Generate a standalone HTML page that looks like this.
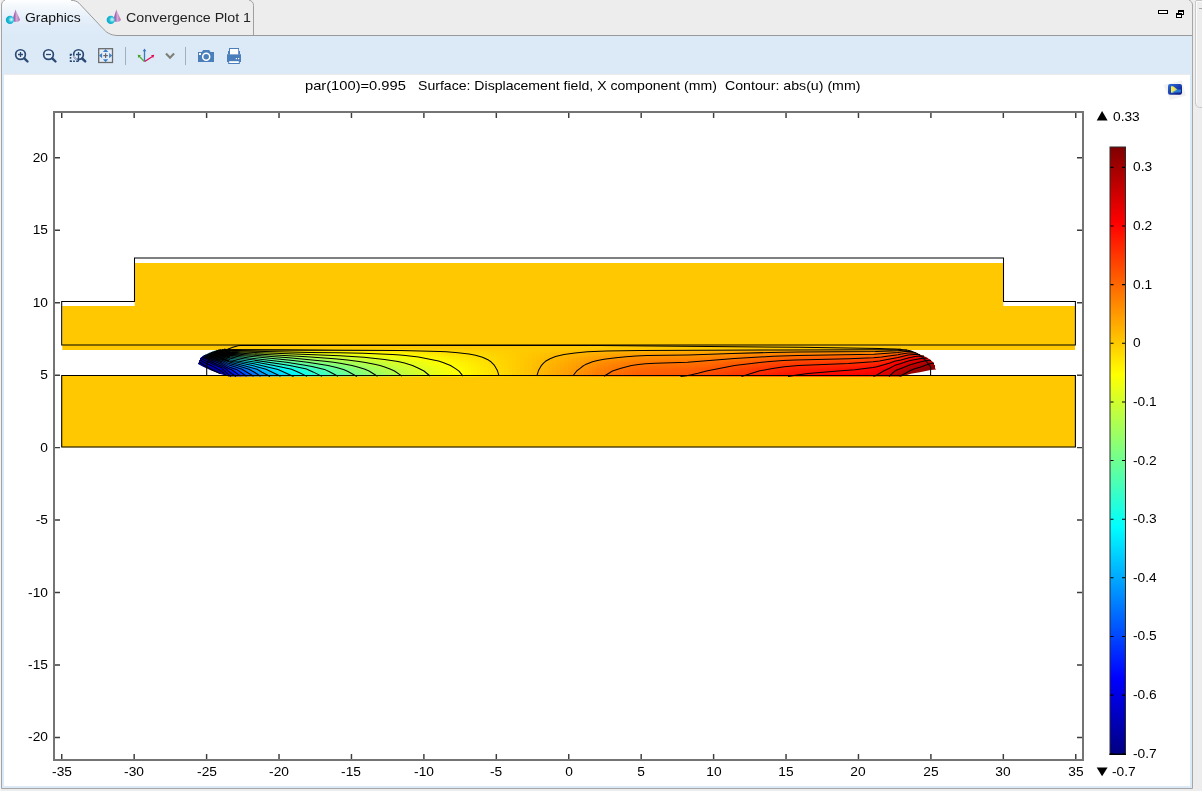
<!DOCTYPE html>
<html><head><meta charset="utf-8"><title>Graphics</title>
<style>
html,body{margin:0;padding:0}
body{width:1202px;height:791px;overflow:hidden;background:#ededed;position:relative;font-family:"Liberation Sans",sans-serif;color:#000}
.t{position:absolute;white-space:pre;line-height:1;font-family:"Liberation Sans",sans-serif;will-change:transform}
svg{position:absolute;left:0;top:0}
</style></head><body>

<svg width="1202" height="791" viewBox="0 0 1202 791">
<defs>
<linearGradient id="tabg" x1="0" y1="0" x2="0" y2="1"><stop offset="0" stop-color="#fdfeff"/><stop offset=".22" stop-color="#f2f7fc"/><stop offset=".48" stop-color="#e7f0fa"/><stop offset=".75" stop-color="#dfebf8"/><stop offset="1" stop-color="#dceaf8"/></linearGradient>
<linearGradient id="cb" x1="0" y1="0" x2="0" y2="1"><stop offset="0.0000" stop-color="#800000"/><stop offset="0.0208" stop-color="#950000"/><stop offset="0.0417" stop-color="#aa0000"/><stop offset="0.0625" stop-color="#bf0000"/><stop offset="0.0833" stop-color="#d50000"/><stop offset="0.1042" stop-color="#ea0000"/><stop offset="0.1250" stop-color="#ff0000"/><stop offset="0.1458" stop-color="#ff1500"/><stop offset="0.1667" stop-color="#ff2a00"/><stop offset="0.1875" stop-color="#ff4000"/><stop offset="0.2083" stop-color="#ff5500"/><stop offset="0.2292" stop-color="#ff6a00"/><stop offset="0.2500" stop-color="#ff8000"/><stop offset="0.2708" stop-color="#ff9500"/><stop offset="0.2917" stop-color="#ffaa00"/><stop offset="0.3125" stop-color="#ffbf00"/><stop offset="0.3333" stop-color="#ffd400"/><stop offset="0.3542" stop-color="#ffea00"/><stop offset="0.3750" stop-color="#ffff00"/><stop offset="0.3958" stop-color="#eaff15"/><stop offset="0.4167" stop-color="#d4ff2b"/><stop offset="0.4375" stop-color="#bfff40"/><stop offset="0.4583" stop-color="#aaff55"/><stop offset="0.4792" stop-color="#95ff6a"/><stop offset="0.5000" stop-color="#80ff80"/><stop offset="0.5208" stop-color="#6aff95"/><stop offset="0.5417" stop-color="#55ffaa"/><stop offset="0.5625" stop-color="#40ffbf"/><stop offset="0.5833" stop-color="#2affd5"/><stop offset="0.6042" stop-color="#15ffea"/><stop offset="0.6250" stop-color="#00ffff"/><stop offset="0.6458" stop-color="#00eaff"/><stop offset="0.6667" stop-color="#00d5ff"/><stop offset="0.6875" stop-color="#00bfff"/><stop offset="0.7083" stop-color="#00aaff"/><stop offset="0.7292" stop-color="#0095ff"/><stop offset="0.7500" stop-color="#0080ff"/><stop offset="0.7708" stop-color="#006aff"/><stop offset="0.7917" stop-color="#0055ff"/><stop offset="0.8125" stop-color="#0040ff"/><stop offset="0.8333" stop-color="#002aff"/><stop offset="0.8542" stop-color="#0015ff"/><stop offset="0.8750" stop-color="#0000ff"/><stop offset="0.8958" stop-color="#0000ea"/><stop offset="0.9167" stop-color="#0000d5"/><stop offset="0.9375" stop-color="#0000bf"/><stop offset="0.9583" stop-color="#0000aa"/><stop offset="0.9792" stop-color="#000095"/><stop offset="1.0000" stop-color="#000080"/></linearGradient>
</defs>
<rect x="0" y="0" width="1" height="791" fill="#f4f4f4"/>
<path d="M1.5 788.5V5C1.5 2.5 3 .8 5 0H1189C1191 1 1192.5 2.5 1192.5 5V788.5Z" fill="#ededed"/>
<rect x="2" y="35" width="1190" height="753" fill="#dceaf8"/>
<path d="M2 35.5V5C2 2.5 3.2 1 5 0H71C75 .4 77 1.4 79 3.2L103 28.6C106 32 110 35.2 117 35.5Z" fill="url(#tabg)"/>
<rect x="4" y="74" width="1186" height="1" fill="#ecebe9"/>
<rect x="4" y="75" width="1186" height="711" fill="#fff"/>
<path d="M1.5 788.5V5C1.5 2.5 3 1 5 0" fill="none" stroke="#a3a3a3"/>
<path d="M1189 0C1191 1 1192.5 2.5 1192.5 5V788.5H1.5" fill="none" stroke="#a6a6a6"/>
<path d="M71 .2C75 .5 77 1.4 79 3.2L103 28.6C106 32 110 35.2 117 35.5H1192" fill="none" stroke="#9a9a9a"/>
<path d="M249 0C252 1 253.5 2.5 253.5 5.5V35" fill="none" stroke="#a0a0a0"/>
<rect x="1196" y="0" width="6" height="1" fill="#c4c4c4"/>
<path d="M1195.5 1V103C1195.5 105.5 1197 107 1199.5 107.5H1202" fill="none" stroke="#c9c9c9"/>
<path d="M1196.5 2V103M1196.5 1.5H1202" fill="none" stroke="#fbfbfb"/>
<rect x="1199" y="8" width="3" height="1" fill="#a8a8a8"/>
<rect x="1158.5" y="10.5" width="9" height="3" fill="#fff" stroke="#000"/>
<rect x="1178.5" y="10.5" width="5" height="4" fill="#fff" stroke="#000"/><rect x="1178" y="10" width="6" height="2" fill="#000"/>
<rect x="1176.5" y="13.5" width="5" height="4" fill="#fff" stroke="#000"/><rect x="1176" y="13" width="6" height="2" fill="#000"/>
<defs><radialGradient id="sph" cx=".66" cy=".46" r=".62"><stop offset="0" stop-color="#d8f6f8"/><stop offset=".25" stop-color="#8fe0ea"/><stop offset=".55" stop-color="#25bdd8"/><stop offset="1" stop-color="#06a9cc"/></radialGradient><linearGradient id="cone" x1="0" y1="0" x2="1" y2="0"><stop offset="0" stop-color="#a458ac"/><stop offset=".3" stop-color="#a862b0"/><stop offset=".55" stop-color="#d2abd6"/><stop offset=".75" stop-color="#c08cc6"/><stop offset="1" stop-color="#b070b8"/></linearGradient></defs>
<g transform="translate(0 0)"><path d="M15.5 9.5L20.2 19.9Q18.6 21.7 16.3 21.9Q13.4 21.9 12.2 20.6Z" fill="url(#cone)"/><circle cx="10" cy="19.9" r="4.15" fill="url(#sph)"/></g>
<g transform="translate(100.8 0)"><path d="M15.5 9.5L20.2 19.9Q18.6 21.7 16.3 21.9Q13.4 21.9 12.2 20.6Z" fill="url(#cone)"/><circle cx="10" cy="19.9" r="4.15" fill="url(#sph)"/></g>
<g fill="none" stroke="#2c4b74"><circle cx="20.5" cy="54.6" r="4.85" stroke-width="1.7" fill="#e5effa"/><path d="M18 54.5h5M20.5 52v5" stroke-width="1.3"/><path d="M24.3 58.4L27.5 61.5" stroke-width="2.4" stroke-linecap="round"/></g>
<g fill="none" stroke="#2c4b74"><circle cx="48.5" cy="54.6" r="4.85" stroke-width="1.7" fill="#e5effa"/><path d="M46 54.5h5" stroke-width="1.3"/><path d="M52.3 58.4L55.5 61.5" stroke-width="2.4" stroke-linecap="round"/></g>
<g fill="none" stroke="#2c4b74"><path d="M72 54.4H70.5V55.9M70.5 56.9V58.7M70.5 60.2V61.3H72M73.1 61.3H74.9M76.1 61.3H78.5" stroke-width="1.5"/><circle cx="78.5" cy="54.6" r="4.85" stroke-width="1.7" fill="#e5effa" fill-opacity=".6"/><path d="M73.7 55.6A4.85 4.85 0 0 0 77.4 59.3" stroke="#b4b9d3" stroke-width="1.7"/><path d="M76 54.5h5M78.5 52V61.3" stroke-width="1.3"/><path d="M82.2 58.5L85.2 61.4" stroke-width="2.5" stroke-linecap="round"/></g>
<rect x="98.7" y="48.7" width="13.8" height="13.8" fill="#e3eefa" stroke="#6a6a6a" stroke-width="1.3"/>
<path d="M105.6 49L108.3 52H102.9ZM105.6 62.2L108.3 59.2H102.9ZM99 55.6L102.1 53V58.2ZM112.2 55.6L109.1 53V58.2Z" fill="#3f7fc4"/>
<path d="M103.3 55.6h4.6M105.6 53.3v4.6" stroke="#666" stroke-width="1.2" fill="none"/>
<rect x="125" y="47" width="1" height="18" fill="#a3afc0"/><rect x="185" y="47" width="1" height="18" fill="#a3afc0"/>
<path d="M144.5 61.5V50" stroke="#3f77b8" stroke-width="1.3" fill="none"/><path d="M144.5 48.6L146.3 51.2H142.7Z" fill="#3f77b8"/>
<path d="M144.3 61.5L139 56" stroke="#4fae35" stroke-width="1.2" fill="none"/><path d="M137.7 54.7L141 55.2L138.3 57.9Z" fill="#3fa428"/>
<path d="M144.7 61.5L152.5 56.4" stroke="#e3004f" stroke-width="1.2" fill="none"/><path d="M154.3 54.8L153.2 58L151 55.2Z" fill="#e3004f"/>
<path d="M166 53.5L170 57.7L174.1 53.5" stroke="#7f7f78" stroke-width="2.1" fill="none"/>
<path d="M198 52H201.8L203.2 50H209.2L210.6 52H214V62H198Z" fill="#4b7fbb"/><circle cx="206.2" cy="56.8" r="3.5" fill="#4b7fbb" stroke="#fff" stroke-width="1.5"/><rect x="199" y="53" width="2" height="2" fill="#fff"/>
<path d="M227 54.3H241V62H239.8V64H228.2V62H227Z" fill="#4b7fbb"/><path d="M229 48H239V54.3H229Z" fill="#4b7fbb"/><rect x="228" y="51" width="12" height="3.3" fill="#4b7fbb"/><rect x="230" y="49" width="8.2" height="5.3" fill="#fff"/><rect x="229.2" y="61.2" width="9.6" height="1.8" fill="#fff"/><rect x="235.8" y="58" width="1.2" height="1.2" fill="#fff"/><rect x="238" y="58" width="1.2" height="1.2" fill="#fff"/>
<defs><linearGradient id="snb" x1="0" y1="0" x2="1" y2="1"><stop offset="0" stop-color="#2f6fe0"/><stop offset=".5" stop-color="#1a3fb2"/><stop offset="1" stop-color="#0c0f78"/></linearGradient><linearGradient id="sny" x1="0" y1="0" x2="1" y2="0"><stop offset="0" stop-color="#f8ef4a"/><stop offset=".55" stop-color="#f0e050"/><stop offset="1" stop-color="#58b8e8"/></linearGradient></defs>
<path d="M1163.5 85L1181.5 80.5L1186 95.5L1170.5 100Z" fill="#f1f1f1"/>
<rect x="1168" y="84" width="14" height="10.8" rx="2.2" fill="url(#snb)"/>
<path d="M1171 86.2H1173L1177.6 89.4L1173 92.7H1171Z" fill="url(#sny)"/><path d="M1171 92.6L1177.5 89.5H1181V92.6Z" fill="#2a8fe0" opacity=".8"/>
<g shape-rendering="crispEdges"><rect x="54" y="112" width="1029" height="648" fill="none" stroke="#747474" stroke-width="2"/></g>
<path d="M61.74 113v5M61.74 759v-5M134.17 113v5M134.17 759v-5M206.60 113v5M206.60 759v-5M279.03 113v5M279.03 759v-5M351.46 113v5M351.46 759v-5M423.89 113v5M423.89 759v-5M496.32 113v5M496.32 759v-5M568.75 113v5M568.75 759v-5M641.18 113v5M641.18 759v-5M713.61 113v5M713.61 759v-5M786.04 113v5M786.04 759v-5M858.47 113v5M858.47 759v-5M930.90 113v5M930.90 759v-5M1003.33 113v5M1003.33 759v-5M1075.76 113v5M1075.76 759v-5M55 737.40h5M1082 737.40h-5M55 664.95h5M1082 664.95h-5M55 592.50h5M1082 592.50h-5M55 520.05h5M1082 520.05h-5M55 447.60h5M1082 447.60h-5M55 375.15h5M1082 375.15h-5M55 302.70h5M1082 302.70h-5M55 230.25h5M1082 230.25h-5M55 157.80h5M1082 157.80h-5" stroke="#3c3c3c" stroke-width="1.45" fill="none"/>
<path d="M62.3 306H134.7V263H1003.3V306H1075V350H62.3Z" fill="#ffc800"/>
<rect x="62" y="375" width="1013.5" height="72.3" fill="#ffc800"/>
<defs><linearGradient id="s0" x1="0" y1="0" x2="0" y2="1"><stop offset="0" stop-color="#000093"/><stop offset="0.05" stop-color="#000091"/><stop offset="0.1" stop-color="#000090"/><stop offset="0.18" stop-color="#00008e"/><stop offset="0.3" stop-color="#00008b"/><stop offset="0.5" stop-color="#000087"/><stop offset="0.74" stop-color="#000084"/><stop offset="1" stop-color="#000082"/></linearGradient><linearGradient id="s1" x1="0" y1="0" x2="0" y2="1"><stop offset="0" stop-color="#0000b5"/><stop offset="0.05" stop-color="#0000b1"/><stop offset="0.1" stop-color="#0000ae"/><stop offset="0.18" stop-color="#0000a7"/><stop offset="0.3" stop-color="#00009f"/><stop offset="0.5" stop-color="#000093"/><stop offset="0.74" stop-color="#000088"/><stop offset="1" stop-color="#000083"/></linearGradient><linearGradient id="s2" x1="0" y1="0" x2="0" y2="1"><stop offset="0" stop-color="#0000d7"/><stop offset="0.05" stop-color="#0000d1"/><stop offset="0.1" stop-color="#0000cb"/><stop offset="0.18" stop-color="#0000c0"/><stop offset="0.3" stop-color="#0000b2"/><stop offset="0.5" stop-color="#00009f"/><stop offset="0.74" stop-color="#00008d"/><stop offset="1" stop-color="#000083"/></linearGradient><linearGradient id="s3" x1="0" y1="0" x2="0" y2="1"><stop offset="0" stop-color="#0000f7"/><stop offset="0.05" stop-color="#0000ef"/><stop offset="0.1" stop-color="#0000e7"/><stop offset="0.18" stop-color="#0000d8"/><stop offset="0.3" stop-color="#0000c5"/><stop offset="0.5" stop-color="#0000ab"/><stop offset="0.74" stop-color="#000091"/><stop offset="1" stop-color="#000084"/></linearGradient><linearGradient id="s4" x1="0" y1="0" x2="0" y2="1"><stop offset="0" stop-color="#0019ff"/><stop offset="0.05" stop-color="#000eff"/><stop offset="0.1" stop-color="#0004ff"/><stop offset="0.18" stop-color="#0000f1"/><stop offset="0.3" stop-color="#0000d8"/><stop offset="0.5" stop-color="#0000b6"/><stop offset="0.74" stop-color="#000096"/><stop offset="1" stop-color="#000084"/></linearGradient><linearGradient id="s5" x1="0" y1="0" x2="0" y2="1"><stop offset="0" stop-color="#0036ff"/><stop offset="0.05" stop-color="#0029ff"/><stop offset="0.1" stop-color="#001dff"/><stop offset="0.18" stop-color="#0007ff"/><stop offset="0.3" stop-color="#0000e8"/><stop offset="0.5" stop-color="#0000c0"/><stop offset="0.74" stop-color="#000099"/><stop offset="1" stop-color="#000085"/></linearGradient><linearGradient id="s6" x1="0" y1="0" x2="0" y2="1"><stop offset="0" stop-color="#004eff"/><stop offset="0.05" stop-color="#0040ff"/><stop offset="0.1" stop-color="#0032ff"/><stop offset="0.18" stop-color="#0019ff"/><stop offset="0.3" stop-color="#0000f6"/><stop offset="0.5" stop-color="#0000c9"/><stop offset="0.74" stop-color="#00009d"/><stop offset="1" stop-color="#000085"/></linearGradient><linearGradient id="s7" x1="0" y1="0" x2="0" y2="1"><stop offset="0" stop-color="#0067ff"/><stop offset="0.05" stop-color="#0057ff"/><stop offset="0.1" stop-color="#0047ff"/><stop offset="0.18" stop-color="#002bff"/><stop offset="0.3" stop-color="#0005ff"/><stop offset="0.5" stop-color="#0000d1"/><stop offset="0.74" stop-color="#0000a0"/><stop offset="1" stop-color="#000086"/></linearGradient><linearGradient id="s8" x1="0" y1="0" x2="0" y2="1"><stop offset="0" stop-color="#007fff"/><stop offset="0.05" stop-color="#006dff"/><stop offset="0.1" stop-color="#005cff"/><stop offset="0.18" stop-color="#003dff"/><stop offset="0.3" stop-color="#0013ff"/><stop offset="0.5" stop-color="#0000da"/><stop offset="0.74" stop-color="#0000a3"/><stop offset="1" stop-color="#000086"/></linearGradient><linearGradient id="s9" x1="0" y1="0" x2="0" y2="1"><stop offset="0" stop-color="#0098ff"/><stop offset="0.05" stop-color="#0084ff"/><stop offset="0.1" stop-color="#0071ff"/><stop offset="0.18" stop-color="#004fff"/><stop offset="0.3" stop-color="#0022ff"/><stop offset="0.5" stop-color="#0000e2"/><stop offset="0.74" stop-color="#0000a6"/><stop offset="1" stop-color="#000087"/></linearGradient><linearGradient id="s10" x1="0" y1="0" x2="0" y2="1"><stop offset="0" stop-color="#00b1ff"/><stop offset="0.05" stop-color="#009bff"/><stop offset="0.1" stop-color="#0086ff"/><stop offset="0.18" stop-color="#0061ff"/><stop offset="0.3" stop-color="#0030ff"/><stop offset="0.5" stop-color="#0000eb"/><stop offset="0.74" stop-color="#0000aa"/><stop offset="1" stop-color="#000087"/></linearGradient><linearGradient id="s11" x1="0" y1="0" x2="0" y2="1"><stop offset="0" stop-color="#00c9ff"/><stop offset="0.05" stop-color="#00b2ff"/><stop offset="0.1" stop-color="#009bff"/><stop offset="0.18" stop-color="#0073ff"/><stop offset="0.3" stop-color="#003eff"/><stop offset="0.5" stop-color="#0000f4"/><stop offset="0.74" stop-color="#0000ad"/><stop offset="1" stop-color="#000088"/></linearGradient><linearGradient id="s12" x1="0" y1="0" x2="0" y2="1"><stop offset="0" stop-color="#00e2ff"/><stop offset="0.05" stop-color="#00c9ff"/><stop offset="0.1" stop-color="#00b1ff"/><stop offset="0.18" stop-color="#0085ff"/><stop offset="0.3" stop-color="#004cff"/><stop offset="0.5" stop-color="#0000fc"/><stop offset="0.74" stop-color="#0000b0"/><stop offset="1" stop-color="#000088"/></linearGradient><linearGradient id="s13" x1="0" y1="0" x2="0" y2="1"><stop offset="0" stop-color="#00faff"/><stop offset="0.05" stop-color="#00dfff"/><stop offset="0.1" stop-color="#00c6ff"/><stop offset="0.18" stop-color="#0098ff"/><stop offset="0.3" stop-color="#005aff"/><stop offset="0.5" stop-color="#0006ff"/><stop offset="0.74" stop-color="#0000b4"/><stop offset="1" stop-color="#000089"/></linearGradient><linearGradient id="s14" x1="0" y1="0" x2="0" y2="1"><stop offset="0" stop-color="#14ffeb"/><stop offset="0.05" stop-color="#00f6ff"/><stop offset="0.1" stop-color="#00dbff"/><stop offset="0.18" stop-color="#00aaff"/><stop offset="0.3" stop-color="#0068ff"/><stop offset="0.5" stop-color="#000fff"/><stop offset="0.74" stop-color="#0000b7"/><stop offset="1" stop-color="#000089"/></linearGradient><linearGradient id="s15" x1="0" y1="0" x2="0" y2="1"><stop offset="0" stop-color="#2cffd3"/><stop offset="0.05" stop-color="#0efff1"/><stop offset="0.1" stop-color="#00f0ff"/><stop offset="0.18" stop-color="#00bcff"/><stop offset="0.3" stop-color="#0076ff"/><stop offset="0.5" stop-color="#0017ff"/><stop offset="0.74" stop-color="#0000bb"/><stop offset="1" stop-color="#00008a"/></linearGradient><linearGradient id="s16" x1="0" y1="0" x2="0" y2="1"><stop offset="0" stop-color="#45ffba"/><stop offset="0.05" stop-color="#25ffda"/><stop offset="0.1" stop-color="#06fff9"/><stop offset="0.18" stop-color="#00ceff"/><stop offset="0.3" stop-color="#0085ff"/><stop offset="0.5" stop-color="#0020ff"/><stop offset="0.74" stop-color="#0000be"/><stop offset="1" stop-color="#00008b"/></linearGradient><linearGradient id="s17" x1="0" y1="0" x2="0" y2="1"><stop offset="0" stop-color="#5effa1"/><stop offset="0.05" stop-color="#3cffc3"/><stop offset="0.1" stop-color="#1bffe4"/><stop offset="0.18" stop-color="#00e0ff"/><stop offset="0.3" stop-color="#0093ff"/><stop offset="0.5" stop-color="#0029ff"/><stop offset="0.74" stop-color="#0000c2"/><stop offset="1" stop-color="#00008c"/></linearGradient><linearGradient id="s18" x1="0" y1="0" x2="0" y2="1"><stop offset="0" stop-color="#76ff89"/><stop offset="0.05" stop-color="#53ffac"/><stop offset="0.1" stop-color="#31ffce"/><stop offset="0.18" stop-color="#00f3ff"/><stop offset="0.3" stop-color="#00a1ff"/><stop offset="0.5" stop-color="#0032ff"/><stop offset="0.74" stop-color="#0000c6"/><stop offset="1" stop-color="#00008d"/></linearGradient><linearGradient id="s19" x1="0" y1="0" x2="0" y2="1"><stop offset="0" stop-color="#8fff70"/><stop offset="0.05" stop-color="#69ff96"/><stop offset="0.1" stop-color="#46ffb9"/><stop offset="0.18" stop-color="#06fff9"/><stop offset="0.3" stop-color="#00b0ff"/><stop offset="0.5" stop-color="#003bff"/><stop offset="0.74" stop-color="#0000ca"/><stop offset="1" stop-color="#00008e"/></linearGradient><linearGradient id="s20" x1="0" y1="0" x2="0" y2="1"><stop offset="0" stop-color="#a7ff58"/><stop offset="0.05" stop-color="#80ff7f"/><stop offset="0.1" stop-color="#5bffa4"/><stop offset="0.18" stop-color="#18ffe7"/><stop offset="0.3" stop-color="#00beff"/><stop offset="0.5" stop-color="#0044ff"/><stop offset="0.74" stop-color="#0000ce"/><stop offset="1" stop-color="#00008f"/></linearGradient><linearGradient id="s21" x1="0" y1="0" x2="0" y2="1"><stop offset="0" stop-color="#bbff44"/><stop offset="0.05" stop-color="#93ff6c"/><stop offset="0.1" stop-color="#6dff92"/><stop offset="0.18" stop-color="#27ffd8"/><stop offset="0.3" stop-color="#00caff"/><stop offset="0.5" stop-color="#004cff"/><stop offset="0.74" stop-color="#0000d1"/><stop offset="1" stop-color="#000090"/></linearGradient><linearGradient id="s22" x1="0" y1="0" x2="0" y2="1"><stop offset="0" stop-color="#cbff34"/><stop offset="0.05" stop-color="#a2ff5d"/><stop offset="0.1" stop-color="#7aff85"/><stop offset="0.18" stop-color="#33ffcc"/><stop offset="0.3" stop-color="#00d3ff"/><stop offset="0.5" stop-color="#0052ff"/><stop offset="0.74" stop-color="#0000d4"/><stop offset="1" stop-color="#000092"/></linearGradient><linearGradient id="s23" x1="0" y1="0" x2="0" y2="1"><stop offset="0" stop-color="#dbff24"/><stop offset="0.05" stop-color="#b1ff4e"/><stop offset="0.1" stop-color="#88ff77"/><stop offset="0.18" stop-color="#3fffc0"/><stop offset="0.3" stop-color="#00ddff"/><stop offset="0.5" stop-color="#0059ff"/><stop offset="0.74" stop-color="#0000d8"/><stop offset="1" stop-color="#000094"/></linearGradient><linearGradient id="s24" x1="0" y1="0" x2="0" y2="1"><stop offset="0" stop-color="#ebff14"/><stop offset="0.05" stop-color="#bfff40"/><stop offset="0.1" stop-color="#96ff69"/><stop offset="0.18" stop-color="#4cffb3"/><stop offset="0.3" stop-color="#00e8ff"/><stop offset="0.5" stop-color="#0061ff"/><stop offset="0.74" stop-color="#0000de"/><stop offset="1" stop-color="#000099"/></linearGradient><linearGradient id="s25" x1="0" y1="0" x2="0" y2="1"><stop offset="0" stop-color="#faff05"/><stop offset="0.05" stop-color="#cfff30"/><stop offset="0.1" stop-color="#a5ff5a"/><stop offset="0.18" stop-color="#5affa5"/><stop offset="0.3" stop-color="#00f4ff"/><stop offset="0.5" stop-color="#006cff"/><stop offset="0.74" stop-color="#0000e7"/><stop offset="1" stop-color="#0000a1"/></linearGradient><linearGradient id="s26" x1="0" y1="0" x2="0" y2="1"><stop offset="0" stop-color="#fff800"/><stop offset="0.05" stop-color="#daff25"/><stop offset="0.1" stop-color="#b0ff4f"/><stop offset="0.18" stop-color="#65ff9a"/><stop offset="0.3" stop-color="#00ffff"/><stop offset="0.5" stop-color="#0075ff"/><stop offset="0.74" stop-color="#0000f0"/><stop offset="1" stop-color="#0000a9"/></linearGradient><linearGradient id="s27" x1="0" y1="0" x2="0" y2="1"><stop offset="0" stop-color="#fff000"/><stop offset="0.05" stop-color="#e2ff1d"/><stop offset="0.1" stop-color="#b8ff47"/><stop offset="0.18" stop-color="#6dff92"/><stop offset="0.3" stop-color="#08fff7"/><stop offset="0.5" stop-color="#007dff"/><stop offset="0.74" stop-color="#0000f8"/><stop offset="1" stop-color="#0000b1"/></linearGradient><linearGradient id="s28" x1="0" y1="0" x2="0" y2="1"><stop offset="0" stop-color="#ffe700"/><stop offset="0.05" stop-color="#ebff14"/><stop offset="0.1" stop-color="#c1ff3e"/><stop offset="0.18" stop-color="#75ff8a"/><stop offset="0.3" stop-color="#10ffef"/><stop offset="0.5" stop-color="#0085ff"/><stop offset="0.74" stop-color="#0000ff"/><stop offset="1" stop-color="#0000b8"/></linearGradient><linearGradient id="s29" x1="0" y1="0" x2="0" y2="1"><stop offset="0" stop-color="#ffdf00"/><stop offset="0.05" stop-color="#f3ff0c"/><stop offset="0.1" stop-color="#c9ff36"/><stop offset="0.18" stop-color="#7dff82"/><stop offset="0.3" stop-color="#18ffe7"/><stop offset="0.5" stop-color="#008cff"/><stop offset="0.74" stop-color="#0007ff"/><stop offset="1" stop-color="#0000bf"/></linearGradient><linearGradient id="s30" x1="0" y1="0" x2="0" y2="1"><stop offset="0" stop-color="#ffd300"/><stop offset="0.05" stop-color="#ffff00"/><stop offset="0.1" stop-color="#d5ff2a"/><stop offset="0.18" stop-color="#88ff77"/><stop offset="0.3" stop-color="#23ffdc"/><stop offset="0.5" stop-color="#0097ff"/><stop offset="0.74" stop-color="#0012ff"/><stop offset="1" stop-color="#0000ca"/></linearGradient><linearGradient id="s31" x1="0" y1="0" x2="0" y2="1"><stop offset="0" stop-color="#ffcb00"/><stop offset="0.05" stop-color="#fff700"/><stop offset="0.1" stop-color="#deff21"/><stop offset="0.18" stop-color="#92ff6d"/><stop offset="0.3" stop-color="#2effd1"/><stop offset="0.5" stop-color="#00a3ff"/><stop offset="0.74" stop-color="#001fff"/><stop offset="1" stop-color="#0000d7"/></linearGradient><linearGradient id="s32" x1="0" y1="0" x2="0" y2="1"><stop offset="0" stop-color="#ffcb00"/><stop offset="0.05" stop-color="#fff600"/><stop offset="0.1" stop-color="#dfff20"/><stop offset="0.18" stop-color="#96ff69"/><stop offset="0.3" stop-color="#34ffcb"/><stop offset="0.5" stop-color="#00acff"/><stop offset="0.74" stop-color="#002bff"/><stop offset="1" stop-color="#0000e5"/></linearGradient><linearGradient id="s33" x1="0" y1="0" x2="0" y2="1"><stop offset="0" stop-color="#ffcb00"/><stop offset="0.05" stop-color="#fff500"/><stop offset="0.1" stop-color="#e1ff1e"/><stop offset="0.18" stop-color="#9aff65"/><stop offset="0.3" stop-color="#3affc5"/><stop offset="0.5" stop-color="#00b5ff"/><stop offset="0.74" stop-color="#0037ff"/><stop offset="1" stop-color="#0000f3"/></linearGradient><linearGradient id="s34" x1="0" y1="0" x2="0" y2="1"><stop offset="0" stop-color="#ffcb00"/><stop offset="0.05" stop-color="#fff400"/><stop offset="0.1" stop-color="#e3ff1c"/><stop offset="0.18" stop-color="#9dff62"/><stop offset="0.3" stop-color="#40ffbf"/><stop offset="0.5" stop-color="#00bfff"/><stop offset="0.74" stop-color="#0043ff"/><stop offset="1" stop-color="#0002ff"/></linearGradient><linearGradient id="s35" x1="0" y1="0" x2="0" y2="1"><stop offset="0" stop-color="#ffcb00"/><stop offset="0.05" stop-color="#fff300"/><stop offset="0.1" stop-color="#e5ff1a"/><stop offset="0.18" stop-color="#a1ff5e"/><stop offset="0.3" stop-color="#46ffb9"/><stop offset="0.5" stop-color="#00c8ff"/><stop offset="0.74" stop-color="#0050ff"/><stop offset="1" stop-color="#0010ff"/></linearGradient><linearGradient id="s36" x1="0" y1="0" x2="0" y2="1"><stop offset="0" stop-color="#ffcb00"/><stop offset="0.05" stop-color="#fff200"/><stop offset="0.1" stop-color="#e7ff18"/><stop offset="0.18" stop-color="#a5ff5a"/><stop offset="0.3" stop-color="#4bffb4"/><stop offset="0.5" stop-color="#00d1ff"/><stop offset="0.74" stop-color="#005cff"/><stop offset="1" stop-color="#001dff"/></linearGradient><linearGradient id="s37" x1="0" y1="0" x2="0" y2="1"><stop offset="0" stop-color="#ffcb00"/><stop offset="0.05" stop-color="#fff100"/><stop offset="0.1" stop-color="#e9ff16"/><stop offset="0.18" stop-color="#a8ff57"/><stop offset="0.3" stop-color="#51ffae"/><stop offset="0.5" stop-color="#00d9ff"/><stop offset="0.74" stop-color="#0066ff"/><stop offset="1" stop-color="#0029ff"/></linearGradient><linearGradient id="s38" x1="0" y1="0" x2="0" y2="1"><stop offset="0" stop-color="#ffcb00"/><stop offset="0.05" stop-color="#fff000"/><stop offset="0.1" stop-color="#ebff14"/><stop offset="0.18" stop-color="#abff54"/><stop offset="0.3" stop-color="#56ffa9"/><stop offset="0.5" stop-color="#00e0ff"/><stop offset="0.74" stop-color="#0070ff"/><stop offset="1" stop-color="#0035ff"/></linearGradient><linearGradient id="s39" x1="0" y1="0" x2="0" y2="1"><stop offset="0" stop-color="#ffcb00"/><stop offset="0.05" stop-color="#ffef00"/><stop offset="0.1" stop-color="#ecff13"/><stop offset="0.18" stop-color="#aeff51"/><stop offset="0.3" stop-color="#5affa5"/><stop offset="0.5" stop-color="#00e8ff"/><stop offset="0.74" stop-color="#007aff"/><stop offset="1" stop-color="#0040ff"/></linearGradient><linearGradient id="s40" x1="0" y1="0" x2="0" y2="1"><stop offset="0" stop-color="#ffcb00"/><stop offset="0.05" stop-color="#ffee00"/><stop offset="0.1" stop-color="#eeff11"/><stop offset="0.18" stop-color="#b1ff4e"/><stop offset="0.3" stop-color="#5fffa0"/><stop offset="0.5" stop-color="#00eeff"/><stop offset="0.74" stop-color="#0083ff"/><stop offset="1" stop-color="#004aff"/></linearGradient><linearGradient id="s41" x1="0" y1="0" x2="0" y2="1"><stop offset="0" stop-color="#ffcb00"/><stop offset="0.05" stop-color="#ffee00"/><stop offset="0.1" stop-color="#efff10"/><stop offset="0.18" stop-color="#b3ff4c"/><stop offset="0.3" stop-color="#63ff9c"/><stop offset="0.5" stop-color="#00f5ff"/><stop offset="0.74" stop-color="#008cff"/><stop offset="1" stop-color="#0054ff"/></linearGradient><linearGradient id="s42" x1="0" y1="0" x2="0" y2="1"><stop offset="0" stop-color="#ffcb00"/><stop offset="0.05" stop-color="#ffed00"/><stop offset="0.1" stop-color="#f0ff0f"/><stop offset="0.18" stop-color="#b6ff49"/><stop offset="0.3" stop-color="#67ff98"/><stop offset="0.5" stop-color="#00fbff"/><stop offset="0.74" stop-color="#0094ff"/><stop offset="1" stop-color="#005dff"/></linearGradient><linearGradient id="s43" x1="0" y1="0" x2="0" y2="1"><stop offset="0" stop-color="#ffcb00"/><stop offset="0.05" stop-color="#ffec00"/><stop offset="0.1" stop-color="#f2ff0d"/><stop offset="0.18" stop-color="#b8ff47"/><stop offset="0.3" stop-color="#6cff93"/><stop offset="0.5" stop-color="#03fffc"/><stop offset="0.74" stop-color="#009dff"/><stop offset="1" stop-color="#0067ff"/></linearGradient><linearGradient id="s44" x1="0" y1="0" x2="0" y2="1"><stop offset="0" stop-color="#ffcb00"/><stop offset="0.05" stop-color="#ffeb00"/><stop offset="0.1" stop-color="#f3ff0c"/><stop offset="0.18" stop-color="#bbff44"/><stop offset="0.3" stop-color="#70ff8f"/><stop offset="0.5" stop-color="#09fff6"/><stop offset="0.74" stop-color="#00a6ff"/><stop offset="1" stop-color="#0071ff"/></linearGradient><linearGradient id="s45" x1="0" y1="0" x2="0" y2="1"><stop offset="0" stop-color="#ffcb00"/><stop offset="0.05" stop-color="#ffeb00"/><stop offset="0.1" stop-color="#f5ff0a"/><stop offset="0.18" stop-color="#beff41"/><stop offset="0.3" stop-color="#74ff8b"/><stop offset="0.5" stop-color="#10ffef"/><stop offset="0.74" stop-color="#00afff"/><stop offset="1" stop-color="#007bff"/></linearGradient><linearGradient id="s46" x1="0" y1="0" x2="0" y2="1"><stop offset="0" stop-color="#ffcb00"/><stop offset="0.05" stop-color="#ffea00"/><stop offset="0.1" stop-color="#f6ff09"/><stop offset="0.18" stop-color="#c0ff3f"/><stop offset="0.3" stop-color="#78ff87"/><stop offset="0.5" stop-color="#16ffe9"/><stop offset="0.74" stop-color="#00b7ff"/><stop offset="1" stop-color="#0084ff"/></linearGradient><linearGradient id="s47" x1="0" y1="0" x2="0" y2="1"><stop offset="0" stop-color="#ffcb00"/><stop offset="0.05" stop-color="#ffe900"/><stop offset="0.1" stop-color="#f7ff08"/><stop offset="0.18" stop-color="#c2ff3d"/><stop offset="0.3" stop-color="#7cff83"/><stop offset="0.5" stop-color="#1cffe3"/><stop offset="0.74" stop-color="#00beff"/><stop offset="1" stop-color="#008dff"/></linearGradient><linearGradient id="s48" x1="0" y1="0" x2="0" y2="1"><stop offset="0" stop-color="#ffcb00"/><stop offset="0.05" stop-color="#ffe900"/><stop offset="0.1" stop-color="#f8ff07"/><stop offset="0.18" stop-color="#c5ff3a"/><stop offset="0.3" stop-color="#7fff80"/><stop offset="0.5" stop-color="#21ffde"/><stop offset="0.74" stop-color="#00c5ff"/><stop offset="1" stop-color="#0095ff"/></linearGradient><linearGradient id="s49" x1="0" y1="0" x2="0" y2="1"><stop offset="0" stop-color="#ffcb00"/><stop offset="0.05" stop-color="#ffe800"/><stop offset="0.1" stop-color="#f9ff06"/><stop offset="0.18" stop-color="#c7ff38"/><stop offset="0.3" stop-color="#83ff7c"/><stop offset="0.5" stop-color="#26ffd9"/><stop offset="0.74" stop-color="#00ccff"/><stop offset="1" stop-color="#009cff"/></linearGradient><linearGradient id="s50" x1="0" y1="0" x2="0" y2="1"><stop offset="0" stop-color="#ffcb00"/><stop offset="0.05" stop-color="#ffe800"/><stop offset="0.1" stop-color="#faff05"/><stop offset="0.18" stop-color="#c8ff37"/><stop offset="0.3" stop-color="#86ff79"/><stop offset="0.5" stop-color="#2bffd4"/><stop offset="0.74" stop-color="#00d2ff"/><stop offset="1" stop-color="#00a3ff"/></linearGradient><linearGradient id="s51" x1="0" y1="0" x2="0" y2="1"><stop offset="0" stop-color="#ffcb00"/><stop offset="0.05" stop-color="#ffe700"/><stop offset="0.1" stop-color="#fbff04"/><stop offset="0.18" stop-color="#caff35"/><stop offset="0.3" stop-color="#89ff76"/><stop offset="0.5" stop-color="#2fffd0"/><stop offset="0.74" stop-color="#00d8ff"/><stop offset="1" stop-color="#00aaff"/></linearGradient><linearGradient id="s52" x1="0" y1="0" x2="0" y2="1"><stop offset="0" stop-color="#ffcb00"/><stop offset="0.05" stop-color="#ffe700"/><stop offset="0.1" stop-color="#fcff03"/><stop offset="0.18" stop-color="#ccff33"/><stop offset="0.3" stop-color="#8cff73"/><stop offset="0.5" stop-color="#34ffcb"/><stop offset="0.74" stop-color="#00deff"/><stop offset="1" stop-color="#00b1ff"/></linearGradient><linearGradient id="s53" x1="0" y1="0" x2="0" y2="1"><stop offset="0" stop-color="#ffcb00"/><stop offset="0.05" stop-color="#ffe600"/><stop offset="0.1" stop-color="#fdff02"/><stop offset="0.18" stop-color="#ceff31"/><stop offset="0.3" stop-color="#8eff71"/><stop offset="0.5" stop-color="#38ffc7"/><stop offset="0.74" stop-color="#00e4ff"/><stop offset="1" stop-color="#00b7ff"/></linearGradient><linearGradient id="s54" x1="0" y1="0" x2="0" y2="1"><stop offset="0" stop-color="#ffcb00"/><stop offset="0.05" stop-color="#ffe600"/><stop offset="0.1" stop-color="#feff01"/><stop offset="0.18" stop-color="#cfff30"/><stop offset="0.3" stop-color="#91ff6e"/><stop offset="0.5" stop-color="#3cffc3"/><stop offset="0.74" stop-color="#00e9ff"/><stop offset="1" stop-color="#00bdff"/></linearGradient><linearGradient id="s55" x1="0" y1="0" x2="0" y2="1"><stop offset="0" stop-color="#ffcb00"/><stop offset="0.05" stop-color="#ffe500"/><stop offset="0.1" stop-color="#ffff00"/><stop offset="0.18" stop-color="#d1ff2e"/><stop offset="0.3" stop-color="#94ff6b"/><stop offset="0.5" stop-color="#40ffbf"/><stop offset="0.74" stop-color="#00eeff"/><stop offset="1" stop-color="#00c3ff"/></linearGradient><linearGradient id="s56" x1="0" y1="0" x2="0" y2="1"><stop offset="0" stop-color="#ffcb00"/><stop offset="0.05" stop-color="#ffe500"/><stop offset="0.1" stop-color="#fffe00"/><stop offset="0.18" stop-color="#d3ff2c"/><stop offset="0.3" stop-color="#96ff69"/><stop offset="0.5" stop-color="#44ffbb"/><stop offset="0.74" stop-color="#00f3ff"/><stop offset="1" stop-color="#00c9ff"/></linearGradient><linearGradient id="s57" x1="0" y1="0" x2="0" y2="1"><stop offset="0" stop-color="#ffcb00"/><stop offset="0.05" stop-color="#ffe500"/><stop offset="0.1" stop-color="#fffd00"/><stop offset="0.18" stop-color="#d4ff2b"/><stop offset="0.3" stop-color="#99ff66"/><stop offset="0.5" stop-color="#48ffb7"/><stop offset="0.74" stop-color="#00f9ff"/><stop offset="1" stop-color="#00cfff"/></linearGradient><linearGradient id="s58" x1="0" y1="0" x2="0" y2="1"><stop offset="0" stop-color="#ffcb00"/><stop offset="0.05" stop-color="#ffe400"/><stop offset="0.1" stop-color="#fffd00"/><stop offset="0.18" stop-color="#d6ff29"/><stop offset="0.3" stop-color="#9bff64"/><stop offset="0.5" stop-color="#4bffb4"/><stop offset="0.74" stop-color="#00feff"/><stop offset="1" stop-color="#00d5ff"/></linearGradient><linearGradient id="s59" x1="0" y1="0" x2="0" y2="1"><stop offset="0" stop-color="#ffcb00"/><stop offset="0.05" stop-color="#ffe400"/><stop offset="0.1" stop-color="#fffc00"/><stop offset="0.18" stop-color="#d7ff28"/><stop offset="0.3" stop-color="#9eff61"/><stop offset="0.5" stop-color="#4fffb0"/><stop offset="0.74" stop-color="#03fffc"/><stop offset="1" stop-color="#00daff"/></linearGradient><linearGradient id="s60" x1="0" y1="0" x2="0" y2="1"><stop offset="0" stop-color="#ffcb00"/><stop offset="0.05" stop-color="#ffe300"/><stop offset="0.1" stop-color="#fffb00"/><stop offset="0.18" stop-color="#d9ff26"/><stop offset="0.3" stop-color="#a0ff5f"/><stop offset="0.5" stop-color="#53ffac"/><stop offset="0.74" stop-color="#08fff7"/><stop offset="1" stop-color="#00e0ff"/></linearGradient><linearGradient id="s61" x1="0" y1="0" x2="0" y2="1"><stop offset="0" stop-color="#ffcb00"/><stop offset="0.05" stop-color="#ffe300"/><stop offset="0.1" stop-color="#fffa00"/><stop offset="0.18" stop-color="#daff25"/><stop offset="0.3" stop-color="#a2ff5d"/><stop offset="0.5" stop-color="#56ffa9"/><stop offset="0.74" stop-color="#0dfff2"/><stop offset="1" stop-color="#00e5ff"/></linearGradient><linearGradient id="s62" x1="0" y1="0" x2="0" y2="1"><stop offset="0" stop-color="#ffcb00"/><stop offset="0.05" stop-color="#ffe300"/><stop offset="0.1" stop-color="#fff900"/><stop offset="0.18" stop-color="#dbff24"/><stop offset="0.3" stop-color="#a5ff5a"/><stop offset="0.5" stop-color="#5affa5"/><stop offset="0.74" stop-color="#12ffed"/><stop offset="1" stop-color="#00eaff"/></linearGradient><linearGradient id="s63" x1="0" y1="0" x2="0" y2="1"><stop offset="0" stop-color="#ffcb00"/><stop offset="0.05" stop-color="#ffe200"/><stop offset="0.1" stop-color="#fff900"/><stop offset="0.18" stop-color="#ddff22"/><stop offset="0.3" stop-color="#a7ff58"/><stop offset="0.5" stop-color="#5dffa2"/><stop offset="0.74" stop-color="#16ffe9"/><stop offset="1" stop-color="#00efff"/></linearGradient><linearGradient id="s64" x1="0" y1="0" x2="0" y2="1"><stop offset="0" stop-color="#ffcb00"/><stop offset="0.05" stop-color="#ffe200"/><stop offset="0.1" stop-color="#fff800"/><stop offset="0.18" stop-color="#deff21"/><stop offset="0.3" stop-color="#a9ff56"/><stop offset="0.5" stop-color="#61ff9e"/><stop offset="0.74" stop-color="#1bffe4"/><stop offset="1" stop-color="#00f5ff"/></linearGradient><linearGradient id="s65" x1="0" y1="0" x2="0" y2="1"><stop offset="0" stop-color="#ffcb00"/><stop offset="0.05" stop-color="#ffe100"/><stop offset="0.1" stop-color="#fff700"/><stop offset="0.18" stop-color="#e0ff1f"/><stop offset="0.3" stop-color="#abff54"/><stop offset="0.5" stop-color="#64ff9b"/><stop offset="0.74" stop-color="#1fffe0"/><stop offset="1" stop-color="#00faff"/></linearGradient><linearGradient id="s66" x1="0" y1="0" x2="0" y2="1"><stop offset="0" stop-color="#ffcb00"/><stop offset="0.05" stop-color="#ffe100"/><stop offset="0.1" stop-color="#fff700"/><stop offset="0.18" stop-color="#e1ff1e"/><stop offset="0.3" stop-color="#aeff51"/><stop offset="0.5" stop-color="#67ff98"/><stop offset="0.74" stop-color="#24ffdb"/><stop offset="1" stop-color="#00ffff"/></linearGradient><linearGradient id="s67" x1="0" y1="0" x2="0" y2="1"><stop offset="0" stop-color="#ffcb00"/><stop offset="0.05" stop-color="#ffe100"/><stop offset="0.1" stop-color="#fff600"/><stop offset="0.18" stop-color="#e2ff1d"/><stop offset="0.3" stop-color="#b0ff4f"/><stop offset="0.5" stop-color="#6bff94"/><stop offset="0.74" stop-color="#28ffd7"/><stop offset="1" stop-color="#05fffa"/></linearGradient><linearGradient id="s68" x1="0" y1="0" x2="0" y2="1"><stop offset="0" stop-color="#ffcb00"/><stop offset="0.05" stop-color="#ffe000"/><stop offset="0.1" stop-color="#fff500"/><stop offset="0.18" stop-color="#e4ff1b"/><stop offset="0.3" stop-color="#b2ff4d"/><stop offset="0.5" stop-color="#6eff91"/><stop offset="0.74" stop-color="#2cffd3"/><stop offset="1" stop-color="#09fff6"/></linearGradient><linearGradient id="s69" x1="0" y1="0" x2="0" y2="1"><stop offset="0" stop-color="#ffcb00"/><stop offset="0.05" stop-color="#ffe000"/><stop offset="0.1" stop-color="#fff400"/><stop offset="0.18" stop-color="#e5ff1a"/><stop offset="0.3" stop-color="#b4ff4b"/><stop offset="0.5" stop-color="#71ff8e"/><stop offset="0.74" stop-color="#31ffce"/><stop offset="1" stop-color="#0efff1"/></linearGradient><linearGradient id="s70" x1="0" y1="0" x2="0" y2="1"><stop offset="0" stop-color="#ffcb00"/><stop offset="0.05" stop-color="#ffe000"/><stop offset="0.1" stop-color="#fff400"/><stop offset="0.18" stop-color="#e6ff19"/><stop offset="0.3" stop-color="#b6ff49"/><stop offset="0.5" stop-color="#74ff8b"/><stop offset="0.74" stop-color="#35ffca"/><stop offset="1" stop-color="#13ffec"/></linearGradient><linearGradient id="s71" x1="0" y1="0" x2="0" y2="1"><stop offset="0" stop-color="#ffcb00"/><stop offset="0.05" stop-color="#ffe000"/><stop offset="0.1" stop-color="#fff300"/><stop offset="0.18" stop-color="#e7ff18"/><stop offset="0.3" stop-color="#b8ff47"/><stop offset="0.5" stop-color="#77ff88"/><stop offset="0.74" stop-color="#39ffc6"/><stop offset="1" stop-color="#18ffe7"/></linearGradient><linearGradient id="s72" x1="0" y1="0" x2="0" y2="1"><stop offset="0" stop-color="#ffcb00"/><stop offset="0.05" stop-color="#ffe000"/><stop offset="0.1" stop-color="#fff300"/><stop offset="0.18" stop-color="#e8ff17"/><stop offset="0.3" stop-color="#b9ff46"/><stop offset="0.5" stop-color="#7aff85"/><stop offset="0.74" stop-color="#3dffc2"/><stop offset="1" stop-color="#1cffe3"/></linearGradient><linearGradient id="s73" x1="0" y1="0" x2="0" y2="1"><stop offset="0" stop-color="#ffcb00"/><stop offset="0.05" stop-color="#ffe000"/><stop offset="0.1" stop-color="#fff300"/><stop offset="0.18" stop-color="#e8ff17"/><stop offset="0.3" stop-color="#bbff44"/><stop offset="0.5" stop-color="#7dff82"/><stop offset="0.74" stop-color="#41ffbe"/><stop offset="1" stop-color="#21ffde"/></linearGradient><linearGradient id="s74" x1="0" y1="0" x2="0" y2="1"><stop offset="0" stop-color="#ffcb00"/><stop offset="0.05" stop-color="#ffe000"/><stop offset="0.1" stop-color="#fff300"/><stop offset="0.18" stop-color="#e9ff16"/><stop offset="0.3" stop-color="#bcff43"/><stop offset="0.5" stop-color="#7fff80"/><stop offset="0.74" stop-color="#45ffba"/><stop offset="1" stop-color="#26ffd9"/></linearGradient><linearGradient id="s75" x1="0" y1="0" x2="0" y2="1"><stop offset="0" stop-color="#ffcb00"/><stop offset="0.05" stop-color="#ffe000"/><stop offset="0.1" stop-color="#fff300"/><stop offset="0.18" stop-color="#eaff15"/><stop offset="0.3" stop-color="#beff41"/><stop offset="0.5" stop-color="#82ff7d"/><stop offset="0.74" stop-color="#49ffb6"/><stop offset="1" stop-color="#2affd5"/></linearGradient><linearGradient id="s76" x1="0" y1="0" x2="0" y2="1"><stop offset="0" stop-color="#ffcb00"/><stop offset="0.05" stop-color="#ffe000"/><stop offset="0.1" stop-color="#fff300"/><stop offset="0.18" stop-color="#eaff15"/><stop offset="0.3" stop-color="#bfff40"/><stop offset="0.5" stop-color="#85ff7a"/><stop offset="0.74" stop-color="#4dffb2"/><stop offset="1" stop-color="#2fffd0"/></linearGradient><linearGradient id="s77" x1="0" y1="0" x2="0" y2="1"><stop offset="0" stop-color="#ffcb00"/><stop offset="0.05" stop-color="#ffe000"/><stop offset="0.1" stop-color="#fff300"/><stop offset="0.18" stop-color="#ebff14"/><stop offset="0.3" stop-color="#c1ff3e"/><stop offset="0.5" stop-color="#87ff78"/><stop offset="0.74" stop-color="#51ffae"/><stop offset="1" stop-color="#33ffcc"/></linearGradient><linearGradient id="s78" x1="0" y1="0" x2="0" y2="1"><stop offset="0" stop-color="#ffcb00"/><stop offset="0.05" stop-color="#ffe000"/><stop offset="0.1" stop-color="#fff300"/><stop offset="0.18" stop-color="#ecff13"/><stop offset="0.3" stop-color="#c2ff3d"/><stop offset="0.5" stop-color="#8aff75"/><stop offset="0.74" stop-color="#55ffaa"/><stop offset="1" stop-color="#38ffc7"/></linearGradient><linearGradient id="s79" x1="0" y1="0" x2="0" y2="1"><stop offset="0" stop-color="#ffcb00"/><stop offset="0.05" stop-color="#ffe000"/><stop offset="0.1" stop-color="#fff300"/><stop offset="0.18" stop-color="#ecff13"/><stop offset="0.3" stop-color="#c4ff3b"/><stop offset="0.5" stop-color="#8dff72"/><stop offset="0.74" stop-color="#59ffa6"/><stop offset="1" stop-color="#3cffc3"/></linearGradient><linearGradient id="s80" x1="0" y1="0" x2="0" y2="1"><stop offset="0" stop-color="#ffcb00"/><stop offset="0.05" stop-color="#ffe000"/><stop offset="0.1" stop-color="#fff300"/><stop offset="0.18" stop-color="#edff12"/><stop offset="0.3" stop-color="#c5ff3a"/><stop offset="0.5" stop-color="#8fff70"/><stop offset="0.74" stop-color="#5dffa2"/><stop offset="1" stop-color="#40ffbf"/></linearGradient><linearGradient id="s81" x1="0" y1="0" x2="0" y2="1"><stop offset="0" stop-color="#ffcb00"/><stop offset="0.05" stop-color="#ffe000"/><stop offset="0.1" stop-color="#fff300"/><stop offset="0.18" stop-color="#eeff11"/><stop offset="0.3" stop-color="#c7ff38"/><stop offset="0.5" stop-color="#92ff6d"/><stop offset="0.74" stop-color="#61ff9e"/><stop offset="1" stop-color="#45ffba"/></linearGradient><linearGradient id="s82" x1="0" y1="0" x2="0" y2="1"><stop offset="0" stop-color="#ffcb00"/><stop offset="0.05" stop-color="#ffe000"/><stop offset="0.1" stop-color="#fff200"/><stop offset="0.18" stop-color="#efff10"/><stop offset="0.3" stop-color="#c9ff36"/><stop offset="0.5" stop-color="#96ff69"/><stop offset="0.74" stop-color="#67ff98"/><stop offset="1" stop-color="#4cffb3"/></linearGradient><linearGradient id="s83" x1="0" y1="0" x2="0" y2="1"><stop offset="0" stop-color="#ffcb00"/><stop offset="0.05" stop-color="#ffe000"/><stop offset="0.1" stop-color="#fff200"/><stop offset="0.18" stop-color="#f0ff0f"/><stop offset="0.3" stop-color="#cbff34"/><stop offset="0.5" stop-color="#9aff65"/><stop offset="0.74" stop-color="#6cff93"/><stop offset="1" stop-color="#52ffad"/></linearGradient><linearGradient id="s84" x1="0" y1="0" x2="0" y2="1"><stop offset="0" stop-color="#ffcb00"/><stop offset="0.05" stop-color="#ffe000"/><stop offset="0.1" stop-color="#fff200"/><stop offset="0.18" stop-color="#f1ff0e"/><stop offset="0.3" stop-color="#cdff32"/><stop offset="0.5" stop-color="#9dff62"/><stop offset="0.74" stop-color="#71ff8e"/><stop offset="1" stop-color="#58ffa7"/></linearGradient><linearGradient id="s85" x1="0" y1="0" x2="0" y2="1"><stop offset="0" stop-color="#ffcb00"/><stop offset="0.05" stop-color="#ffe000"/><stop offset="0.1" stop-color="#fff200"/><stop offset="0.18" stop-color="#f2ff0d"/><stop offset="0.3" stop-color="#d0ff2f"/><stop offset="0.5" stop-color="#a1ff5e"/><stop offset="0.74" stop-color="#76ff89"/><stop offset="1" stop-color="#5effa1"/></linearGradient><linearGradient id="s86" x1="0" y1="0" x2="0" y2="1"><stop offset="0" stop-color="#ffcb00"/><stop offset="0.05" stop-color="#ffe000"/><stop offset="0.1" stop-color="#fff100"/><stop offset="0.18" stop-color="#f3ff0c"/><stop offset="0.3" stop-color="#d2ff2d"/><stop offset="0.5" stop-color="#a4ff5b"/><stop offset="0.74" stop-color="#7bff84"/><stop offset="1" stop-color="#63ff9c"/></linearGradient><linearGradient id="s87" x1="0" y1="0" x2="0" y2="1"><stop offset="0" stop-color="#ffcb00"/><stop offset="0.05" stop-color="#ffdf00"/><stop offset="0.1" stop-color="#fff100"/><stop offset="0.18" stop-color="#f4ff0b"/><stop offset="0.3" stop-color="#d4ff2b"/><stop offset="0.5" stop-color="#a8ff57"/><stop offset="0.74" stop-color="#80ff7f"/><stop offset="1" stop-color="#69ff96"/></linearGradient><linearGradient id="s88" x1="0" y1="0" x2="0" y2="1"><stop offset="0" stop-color="#ffcb00"/><stop offset="0.05" stop-color="#ffdf00"/><stop offset="0.1" stop-color="#fff100"/><stop offset="0.18" stop-color="#f5ff0a"/><stop offset="0.3" stop-color="#d6ff29"/><stop offset="0.5" stop-color="#abff54"/><stop offset="0.74" stop-color="#85ff7a"/><stop offset="1" stop-color="#6eff91"/></linearGradient><linearGradient id="s89" x1="0" y1="0" x2="0" y2="1"><stop offset="0" stop-color="#ffcb00"/><stop offset="0.05" stop-color="#ffdf00"/><stop offset="0.1" stop-color="#fff000"/><stop offset="0.18" stop-color="#f6ff09"/><stop offset="0.3" stop-color="#d8ff27"/><stop offset="0.5" stop-color="#afff50"/><stop offset="0.74" stop-color="#8aff75"/><stop offset="1" stop-color="#74ff8b"/></linearGradient><linearGradient id="s90" x1="0" y1="0" x2="0" y2="1"><stop offset="0" stop-color="#ffcb00"/><stop offset="0.05" stop-color="#ffdf00"/><stop offset="0.1" stop-color="#fff000"/><stop offset="0.18" stop-color="#f7ff08"/><stop offset="0.3" stop-color="#daff25"/><stop offset="0.5" stop-color="#b2ff4d"/><stop offset="0.74" stop-color="#8fff70"/><stop offset="1" stop-color="#79ff86"/></linearGradient><linearGradient id="s91" x1="0" y1="0" x2="0" y2="1"><stop offset="0" stop-color="#ffcb00"/><stop offset="0.05" stop-color="#ffdf00"/><stop offset="0.1" stop-color="#fff000"/><stop offset="0.18" stop-color="#f8ff07"/><stop offset="0.3" stop-color="#dcff23"/><stop offset="0.5" stop-color="#b5ff4a"/><stop offset="0.74" stop-color="#93ff6c"/><stop offset="1" stop-color="#7eff81"/></linearGradient><linearGradient id="s92" x1="0" y1="0" x2="0" y2="1"><stop offset="0" stop-color="#ffcb00"/><stop offset="0.05" stop-color="#ffdf00"/><stop offset="0.1" stop-color="#ffef00"/><stop offset="0.18" stop-color="#f9ff06"/><stop offset="0.3" stop-color="#deff21"/><stop offset="0.5" stop-color="#b8ff47"/><stop offset="0.74" stop-color="#98ff67"/><stop offset="1" stop-color="#83ff7c"/></linearGradient><linearGradient id="s93" x1="0" y1="0" x2="0" y2="1"><stop offset="0" stop-color="#ffcb00"/><stop offset="0.05" stop-color="#ffdf00"/><stop offset="0.1" stop-color="#ffef00"/><stop offset="0.18" stop-color="#faff05"/><stop offset="0.3" stop-color="#dfff20"/><stop offset="0.5" stop-color="#bbff44"/><stop offset="0.74" stop-color="#9cff63"/><stop offset="1" stop-color="#88ff77"/></linearGradient><linearGradient id="s94" x1="0" y1="0" x2="0" y2="1"><stop offset="0" stop-color="#ffcb00"/><stop offset="0.05" stop-color="#ffde00"/><stop offset="0.1" stop-color="#ffee00"/><stop offset="0.18" stop-color="#fbff04"/><stop offset="0.3" stop-color="#e1ff1e"/><stop offset="0.5" stop-color="#bfff40"/><stop offset="0.74" stop-color="#a0ff5f"/><stop offset="1" stop-color="#8dff72"/></linearGradient><linearGradient id="s95" x1="0" y1="0" x2="0" y2="1"><stop offset="0" stop-color="#ffcb00"/><stop offset="0.05" stop-color="#ffde00"/><stop offset="0.1" stop-color="#ffee00"/><stop offset="0.18" stop-color="#fcff03"/><stop offset="0.3" stop-color="#e3ff1c"/><stop offset="0.5" stop-color="#c2ff3d"/><stop offset="0.74" stop-color="#a4ff5b"/><stop offset="1" stop-color="#92ff6d"/></linearGradient><linearGradient id="s96" x1="0" y1="0" x2="0" y2="1"><stop offset="0" stop-color="#ffcb00"/><stop offset="0.05" stop-color="#ffde00"/><stop offset="0.1" stop-color="#ffee00"/><stop offset="0.18" stop-color="#fdff02"/><stop offset="0.3" stop-color="#e5ff1a"/><stop offset="0.5" stop-color="#c5ff3a"/><stop offset="0.74" stop-color="#a9ff56"/><stop offset="1" stop-color="#96ff69"/></linearGradient><linearGradient id="s97" x1="0" y1="0" x2="0" y2="1"><stop offset="0" stop-color="#ffcb00"/><stop offset="0.05" stop-color="#ffde00"/><stop offset="0.1" stop-color="#ffed00"/><stop offset="0.18" stop-color="#feff01"/><stop offset="0.3" stop-color="#e7ff18"/><stop offset="0.5" stop-color="#c7ff38"/><stop offset="0.74" stop-color="#adff52"/><stop offset="1" stop-color="#9bff64"/></linearGradient><linearGradient id="s98" x1="0" y1="0" x2="0" y2="1"><stop offset="0" stop-color="#ffcb00"/><stop offset="0.05" stop-color="#ffdd00"/><stop offset="0.1" stop-color="#ffed00"/><stop offset="0.18" stop-color="#ffff00"/><stop offset="0.3" stop-color="#e9ff16"/><stop offset="0.5" stop-color="#caff35"/><stop offset="0.74" stop-color="#b0ff4f"/><stop offset="1" stop-color="#9fff60"/></linearGradient><linearGradient id="s99" x1="0" y1="0" x2="0" y2="1"><stop offset="0" stop-color="#ffcb00"/><stop offset="0.05" stop-color="#ffdd00"/><stop offset="0.1" stop-color="#ffec00"/><stop offset="0.18" stop-color="#fffd00"/><stop offset="0.3" stop-color="#ebff14"/><stop offset="0.5" stop-color="#cdff32"/><stop offset="0.74" stop-color="#b4ff4b"/><stop offset="1" stop-color="#a4ff5b"/></linearGradient><linearGradient id="s100" x1="0" y1="0" x2="0" y2="1"><stop offset="0" stop-color="#ffcb00"/><stop offset="0.05" stop-color="#ffdd00"/><stop offset="0.1" stop-color="#ffec00"/><stop offset="0.18" stop-color="#fffc00"/><stop offset="0.3" stop-color="#ecff13"/><stop offset="0.5" stop-color="#d0ff2f"/><stop offset="0.74" stop-color="#b8ff47"/><stop offset="1" stop-color="#a8ff57"/></linearGradient><linearGradient id="s101" x1="0" y1="0" x2="0" y2="1"><stop offset="0" stop-color="#ffcb00"/><stop offset="0.05" stop-color="#ffdd00"/><stop offset="0.1" stop-color="#ffeb00"/><stop offset="0.18" stop-color="#fffb00"/><stop offset="0.3" stop-color="#eeff11"/><stop offset="0.5" stop-color="#d3ff2c"/><stop offset="0.74" stop-color="#bcff43"/><stop offset="1" stop-color="#acff53"/></linearGradient><linearGradient id="s102" x1="0" y1="0" x2="0" y2="1"><stop offset="0" stop-color="#ffcb00"/><stop offset="0.05" stop-color="#ffdc00"/><stop offset="0.1" stop-color="#ffeb00"/><stop offset="0.18" stop-color="#fffa00"/><stop offset="0.3" stop-color="#f0ff0f"/><stop offset="0.5" stop-color="#d5ff2a"/><stop offset="0.74" stop-color="#bfff40"/><stop offset="1" stop-color="#b0ff4f"/></linearGradient><linearGradient id="s103" x1="0" y1="0" x2="0" y2="1"><stop offset="0" stop-color="#ffcb00"/><stop offset="0.05" stop-color="#ffdc00"/><stop offset="0.1" stop-color="#ffea00"/><stop offset="0.18" stop-color="#fff900"/><stop offset="0.3" stop-color="#f2ff0d"/><stop offset="0.5" stop-color="#d8ff27"/><stop offset="0.74" stop-color="#c3ff3c"/><stop offset="1" stop-color="#b4ff4b"/></linearGradient><linearGradient id="s104" x1="0" y1="0" x2="0" y2="1"><stop offset="0" stop-color="#ffcb00"/><stop offset="0.05" stop-color="#ffdc00"/><stop offset="0.1" stop-color="#ffe900"/><stop offset="0.18" stop-color="#fff800"/><stop offset="0.3" stop-color="#f3ff0c"/><stop offset="0.5" stop-color="#dbff24"/><stop offset="0.74" stop-color="#c7ff38"/><stop offset="1" stop-color="#b8ff47"/></linearGradient><linearGradient id="s105" x1="0" y1="0" x2="0" y2="1"><stop offset="0" stop-color="#ffcb00"/><stop offset="0.05" stop-color="#ffdb00"/><stop offset="0.1" stop-color="#ffe800"/><stop offset="0.18" stop-color="#fff700"/><stop offset="0.3" stop-color="#f5ff0a"/><stop offset="0.5" stop-color="#deff21"/><stop offset="0.74" stop-color="#caff35"/><stop offset="1" stop-color="#bcff43"/></linearGradient><linearGradient id="s106" x1="0" y1="0" x2="0" y2="1"><stop offset="0" stop-color="#ffcb00"/><stop offset="0.05" stop-color="#ffdb00"/><stop offset="0.1" stop-color="#ffe700"/><stop offset="0.18" stop-color="#fff500"/><stop offset="0.3" stop-color="#f7ff08"/><stop offset="0.5" stop-color="#e0ff1f"/><stop offset="0.74" stop-color="#ceff31"/><stop offset="1" stop-color="#c0ff3f"/></linearGradient><linearGradient id="s107" x1="0" y1="0" x2="0" y2="1"><stop offset="0" stop-color="#ffcb00"/><stop offset="0.05" stop-color="#ffda00"/><stop offset="0.1" stop-color="#ffe700"/><stop offset="0.18" stop-color="#fff400"/><stop offset="0.3" stop-color="#f9ff06"/><stop offset="0.5" stop-color="#e3ff1c"/><stop offset="0.74" stop-color="#d1ff2e"/><stop offset="1" stop-color="#c4ff3b"/></linearGradient><linearGradient id="s108" x1="0" y1="0" x2="0" y2="1"><stop offset="0" stop-color="#ffcb00"/><stop offset="0.05" stop-color="#ffda00"/><stop offset="0.1" stop-color="#ffe600"/><stop offset="0.18" stop-color="#fff200"/><stop offset="0.3" stop-color="#fbff04"/><stop offset="0.5" stop-color="#e6ff19"/><stop offset="0.74" stop-color="#d4ff2b"/><stop offset="1" stop-color="#c8ff37"/></linearGradient><linearGradient id="s109" x1="0" y1="0" x2="0" y2="1"><stop offset="0" stop-color="#ffcb00"/><stop offset="0.05" stop-color="#ffd900"/><stop offset="0.1" stop-color="#ffe500"/><stop offset="0.18" stop-color="#fff100"/><stop offset="0.3" stop-color="#fdff02"/><stop offset="0.5" stop-color="#e9ff16"/><stop offset="0.74" stop-color="#d8ff27"/><stop offset="1" stop-color="#ccff33"/></linearGradient><linearGradient id="s110" x1="0" y1="0" x2="0" y2="1"><stop offset="0" stop-color="#ffcb00"/><stop offset="0.05" stop-color="#ffd900"/><stop offset="0.1" stop-color="#ffe400"/><stop offset="0.18" stop-color="#fff000"/><stop offset="0.3" stop-color="#ffff00"/><stop offset="0.5" stop-color="#ebff14"/><stop offset="0.74" stop-color="#dbff24"/><stop offset="1" stop-color="#cfff30"/></linearGradient><linearGradient id="s111" x1="0" y1="0" x2="0" y2="1"><stop offset="0" stop-color="#ffcb00"/><stop offset="0.05" stop-color="#ffd800"/><stop offset="0.1" stop-color="#ffe300"/><stop offset="0.18" stop-color="#ffee00"/><stop offset="0.3" stop-color="#fffd00"/><stop offset="0.5" stop-color="#eeff11"/><stop offset="0.74" stop-color="#deff21"/><stop offset="1" stop-color="#d3ff2c"/></linearGradient><linearGradient id="s112" x1="0" y1="0" x2="0" y2="1"><stop offset="0" stop-color="#ffcb00"/><stop offset="0.05" stop-color="#ffd800"/><stop offset="0.1" stop-color="#ffe200"/><stop offset="0.18" stop-color="#ffed00"/><stop offset="0.3" stop-color="#fffb00"/><stop offset="0.5" stop-color="#f0ff0f"/><stop offset="0.74" stop-color="#e1ff1e"/><stop offset="1" stop-color="#d6ff29"/></linearGradient><linearGradient id="s113" x1="0" y1="0" x2="0" y2="1"><stop offset="0" stop-color="#ffcb00"/><stop offset="0.05" stop-color="#ffd700"/><stop offset="0.1" stop-color="#ffe100"/><stop offset="0.18" stop-color="#ffec00"/><stop offset="0.3" stop-color="#fff900"/><stop offset="0.5" stop-color="#f3ff0c"/><stop offset="0.74" stop-color="#e4ff1b"/><stop offset="1" stop-color="#daff25"/></linearGradient><linearGradient id="s114" x1="0" y1="0" x2="0" y2="1"><stop offset="0" stop-color="#ffcb00"/><stop offset="0.05" stop-color="#ffd700"/><stop offset="0.1" stop-color="#ffe000"/><stop offset="0.18" stop-color="#ffea00"/><stop offset="0.3" stop-color="#fff700"/><stop offset="0.5" stop-color="#f5ff0a"/><stop offset="0.74" stop-color="#e7ff18"/><stop offset="1" stop-color="#ddff22"/></linearGradient><linearGradient id="s115" x1="0" y1="0" x2="0" y2="1"><stop offset="0" stop-color="#ffcb00"/><stop offset="0.05" stop-color="#ffd600"/><stop offset="0.1" stop-color="#ffdf00"/><stop offset="0.18" stop-color="#ffe900"/><stop offset="0.3" stop-color="#fff600"/><stop offset="0.5" stop-color="#f8ff07"/><stop offset="0.74" stop-color="#eaff15"/><stop offset="1" stop-color="#e1ff1e"/></linearGradient><linearGradient id="s116" x1="0" y1="0" x2="0" y2="1"><stop offset="0" stop-color="#ffcb00"/><stop offset="0.05" stop-color="#ffd600"/><stop offset="0.1" stop-color="#ffdf00"/><stop offset="0.18" stop-color="#ffe800"/><stop offset="0.3" stop-color="#fff400"/><stop offset="0.5" stop-color="#faff05"/><stop offset="0.74" stop-color="#edff12"/><stop offset="1" stop-color="#e4ff1b"/></linearGradient><linearGradient id="s117" x1="0" y1="0" x2="0" y2="1"><stop offset="0" stop-color="#ffcb00"/><stop offset="0.05" stop-color="#ffd500"/><stop offset="0.1" stop-color="#ffde00"/><stop offset="0.18" stop-color="#ffe700"/><stop offset="0.3" stop-color="#fff200"/><stop offset="0.5" stop-color="#fdff02"/><stop offset="0.74" stop-color="#f0ff0f"/><stop offset="1" stop-color="#e7ff18"/></linearGradient><linearGradient id="s118" x1="0" y1="0" x2="0" y2="1"><stop offset="0" stop-color="#ffcb00"/><stop offset="0.05" stop-color="#ffd500"/><stop offset="0.1" stop-color="#ffdd00"/><stop offset="0.18" stop-color="#ffe600"/><stop offset="0.3" stop-color="#fff100"/><stop offset="0.5" stop-color="#ffff00"/><stop offset="0.74" stop-color="#f3ff0c"/><stop offset="1" stop-color="#eaff15"/></linearGradient><linearGradient id="s119" x1="0" y1="0" x2="0" y2="1"><stop offset="0" stop-color="#ffcb00"/><stop offset="0.05" stop-color="#ffd400"/><stop offset="0.1" stop-color="#ffdc00"/><stop offset="0.18" stop-color="#ffe400"/><stop offset="0.3" stop-color="#ffef00"/><stop offset="0.5" stop-color="#fffd00"/><stop offset="0.74" stop-color="#f6ff09"/><stop offset="1" stop-color="#eeff11"/></linearGradient><linearGradient id="s120" x1="0" y1="0" x2="0" y2="1"><stop offset="0" stop-color="#ffcb00"/><stop offset="0.05" stop-color="#ffd400"/><stop offset="0.1" stop-color="#ffdb00"/><stop offset="0.18" stop-color="#ffe300"/><stop offset="0.3" stop-color="#ffed00"/><stop offset="0.5" stop-color="#fffb00"/><stop offset="0.74" stop-color="#f8ff07"/><stop offset="1" stop-color="#f1ff0e"/></linearGradient><linearGradient id="s121" x1="0" y1="0" x2="0" y2="1"><stop offset="0" stop-color="#ffcb00"/><stop offset="0.05" stop-color="#ffd400"/><stop offset="0.1" stop-color="#ffdb00"/><stop offset="0.18" stop-color="#ffe200"/><stop offset="0.3" stop-color="#ffec00"/><stop offset="0.5" stop-color="#fff800"/><stop offset="0.74" stop-color="#fbff04"/><stop offset="1" stop-color="#f4ff0b"/></linearGradient><linearGradient id="s122" x1="0" y1="0" x2="0" y2="1"><stop offset="0" stop-color="#ffcb00"/><stop offset="0.05" stop-color="#ffd300"/><stop offset="0.1" stop-color="#ffda00"/><stop offset="0.18" stop-color="#ffe100"/><stop offset="0.3" stop-color="#ffea00"/><stop offset="0.5" stop-color="#fff600"/><stop offset="0.74" stop-color="#feff01"/><stop offset="1" stop-color="#f7ff08"/></linearGradient><linearGradient id="s123" x1="0" y1="0" x2="0" y2="1"><stop offset="0" stop-color="#ffcb00"/><stop offset="0.05" stop-color="#ffd300"/><stop offset="0.1" stop-color="#ffd900"/><stop offset="0.18" stop-color="#ffe000"/><stop offset="0.3" stop-color="#ffe900"/><stop offset="0.5" stop-color="#fff400"/><stop offset="0.74" stop-color="#fffd00"/><stop offset="1" stop-color="#faff05"/></linearGradient><linearGradient id="s124" x1="0" y1="0" x2="0" y2="1"><stop offset="0" stop-color="#ffcb00"/><stop offset="0.05" stop-color="#ffd200"/><stop offset="0.1" stop-color="#ffd800"/><stop offset="0.18" stop-color="#ffdf00"/><stop offset="0.3" stop-color="#ffe700"/><stop offset="0.5" stop-color="#fff200"/><stop offset="0.74" stop-color="#fffb00"/><stop offset="1" stop-color="#fdff02"/></linearGradient><linearGradient id="s125" x1="0" y1="0" x2="0" y2="1"><stop offset="0" stop-color="#ffcb00"/><stop offset="0.05" stop-color="#ffd200"/><stop offset="0.1" stop-color="#ffd800"/><stop offset="0.18" stop-color="#ffde00"/><stop offset="0.3" stop-color="#ffe500"/><stop offset="0.5" stop-color="#fff000"/><stop offset="0.74" stop-color="#fff800"/><stop offset="1" stop-color="#fffe00"/></linearGradient><linearGradient id="s126" x1="0" y1="0" x2="0" y2="1"><stop offset="0" stop-color="#ffcb00"/><stop offset="0.05" stop-color="#ffd100"/><stop offset="0.1" stop-color="#ffd700"/><stop offset="0.18" stop-color="#ffdd00"/><stop offset="0.3" stop-color="#ffe400"/><stop offset="0.5" stop-color="#ffee00"/><stop offset="0.74" stop-color="#fff500"/><stop offset="1" stop-color="#fffb00"/></linearGradient><linearGradient id="s127" x1="0" y1="0" x2="0" y2="1"><stop offset="0" stop-color="#ffcb00"/><stop offset="0.05" stop-color="#ffd100"/><stop offset="0.1" stop-color="#ffd600"/><stop offset="0.18" stop-color="#ffdb00"/><stop offset="0.3" stop-color="#ffe200"/><stop offset="0.5" stop-color="#ffeb00"/><stop offset="0.74" stop-color="#fff300"/><stop offset="1" stop-color="#fff800"/></linearGradient><linearGradient id="s128" x1="0" y1="0" x2="0" y2="1"><stop offset="0" stop-color="#ffcb00"/><stop offset="0.05" stop-color="#ffd100"/><stop offset="0.1" stop-color="#ffd500"/><stop offset="0.18" stop-color="#ffda00"/><stop offset="0.3" stop-color="#ffe100"/><stop offset="0.5" stop-color="#ffe900"/><stop offset="0.74" stop-color="#fff000"/><stop offset="1" stop-color="#fff500"/></linearGradient><linearGradient id="s129" x1="0" y1="0" x2="0" y2="1"><stop offset="0" stop-color="#ffcb00"/><stop offset="0.05" stop-color="#ffd000"/><stop offset="0.1" stop-color="#ffd500"/><stop offset="0.18" stop-color="#ffd900"/><stop offset="0.3" stop-color="#ffdf00"/><stop offset="0.5" stop-color="#ffe700"/><stop offset="0.74" stop-color="#ffee00"/><stop offset="1" stop-color="#fff200"/></linearGradient><linearGradient id="s130" x1="0" y1="0" x2="0" y2="1"><stop offset="0" stop-color="#ffcb00"/><stop offset="0.05" stop-color="#ffd000"/><stop offset="0.1" stop-color="#ffd400"/><stop offset="0.18" stop-color="#ffd800"/><stop offset="0.3" stop-color="#ffde00"/><stop offset="0.5" stop-color="#ffe500"/><stop offset="0.74" stop-color="#ffeb00"/><stop offset="1" stop-color="#ffef00"/></linearGradient><linearGradient id="s131" x1="0" y1="0" x2="0" y2="1"><stop offset="0" stop-color="#ffcb00"/><stop offset="0.05" stop-color="#ffcf00"/><stop offset="0.1" stop-color="#ffd300"/><stop offset="0.18" stop-color="#ffd700"/><stop offset="0.3" stop-color="#ffdc00"/><stop offset="0.5" stop-color="#ffe300"/><stop offset="0.74" stop-color="#ffe800"/><stop offset="1" stop-color="#ffec00"/></linearGradient><linearGradient id="s132" x1="0" y1="0" x2="0" y2="1"><stop offset="0" stop-color="#ffcb00"/><stop offset="0.05" stop-color="#ffcf00"/><stop offset="0.1" stop-color="#ffd200"/><stop offset="0.18" stop-color="#ffd600"/><stop offset="0.3" stop-color="#ffda00"/><stop offset="0.5" stop-color="#ffe000"/><stop offset="0.74" stop-color="#ffe500"/><stop offset="1" stop-color="#ffe800"/></linearGradient><linearGradient id="s133" x1="0" y1="0" x2="0" y2="1"><stop offset="0" stop-color="#ffcb00"/><stop offset="0.05" stop-color="#ffce00"/><stop offset="0.1" stop-color="#ffd100"/><stop offset="0.18" stop-color="#ffd400"/><stop offset="0.3" stop-color="#ffd800"/><stop offset="0.5" stop-color="#ffdd00"/><stop offset="0.74" stop-color="#ffe100"/><stop offset="1" stop-color="#ffe400"/></linearGradient><linearGradient id="s134" x1="0" y1="0" x2="0" y2="1"><stop offset="0" stop-color="#ffcb00"/><stop offset="0.05" stop-color="#ffce00"/><stop offset="0.1" stop-color="#ffd000"/><stop offset="0.18" stop-color="#ffd300"/><stop offset="0.3" stop-color="#ffd600"/><stop offset="0.5" stop-color="#ffdb00"/><stop offset="0.74" stop-color="#ffde00"/><stop offset="1" stop-color="#ffe100"/></linearGradient><linearGradient id="s135" x1="0" y1="0" x2="0" y2="1"><stop offset="0" stop-color="#ffcb00"/><stop offset="0.05" stop-color="#ffcd00"/><stop offset="0.1" stop-color="#ffcf00"/><stop offset="0.18" stop-color="#ffd100"/><stop offset="0.3" stop-color="#ffd400"/><stop offset="0.5" stop-color="#ffd800"/><stop offset="0.74" stop-color="#ffdb00"/><stop offset="1" stop-color="#ffdd00"/></linearGradient><linearGradient id="s136" x1="0" y1="0" x2="0" y2="1"><stop offset="0" stop-color="#ffcb00"/><stop offset="0.05" stop-color="#ffcd00"/><stop offset="0.1" stop-color="#ffce00"/><stop offset="0.18" stop-color="#ffd000"/><stop offset="0.3" stop-color="#ffd200"/><stop offset="0.5" stop-color="#ffd500"/><stop offset="0.74" stop-color="#ffd800"/><stop offset="1" stop-color="#ffd900"/></linearGradient><linearGradient id="s137" x1="0" y1="0" x2="0" y2="1"><stop offset="0" stop-color="#ffcb00"/><stop offset="0.05" stop-color="#ffcc00"/><stop offset="0.1" stop-color="#ffcd00"/><stop offset="0.18" stop-color="#ffcf00"/><stop offset="0.3" stop-color="#ffd000"/><stop offset="0.5" stop-color="#ffd300"/><stop offset="0.74" stop-color="#ffd400"/><stop offset="1" stop-color="#ffd600"/></linearGradient><linearGradient id="s138" x1="0" y1="0" x2="0" y2="1"><stop offset="0" stop-color="#ffcb00"/><stop offset="0.05" stop-color="#ffcc00"/><stop offset="0.1" stop-color="#ffcc00"/><stop offset="0.18" stop-color="#ffcd00"/><stop offset="0.3" stop-color="#ffce00"/><stop offset="0.5" stop-color="#ffd000"/><stop offset="0.74" stop-color="#ffd100"/><stop offset="1" stop-color="#ffd200"/></linearGradient><linearGradient id="s139" x1="0" y1="0" x2="0" y2="1"><stop offset="0" stop-color="#ffcb00"/><stop offset="0.05" stop-color="#ffcb00"/><stop offset="0.1" stop-color="#ffcc00"/><stop offset="0.18" stop-color="#ffcc00"/><stop offset="0.3" stop-color="#ffcd00"/><stop offset="0.5" stop-color="#ffcd00"/><stop offset="0.74" stop-color="#ffce00"/><stop offset="1" stop-color="#ffce00"/></linearGradient><linearGradient id="s140" x1="0" y1="0" x2="0" y2="1"><stop offset="0" stop-color="#ffcb00"/><stop offset="0.05" stop-color="#ffcb00"/><stop offset="0.1" stop-color="#ffcb00"/><stop offset="0.18" stop-color="#ffcb00"/><stop offset="0.3" stop-color="#ffcb00"/><stop offset="0.5" stop-color="#ffcb00"/><stop offset="0.74" stop-color="#ffcb00"/><stop offset="1" stop-color="#ffcb00"/></linearGradient><linearGradient id="s141" x1="0" y1="0" x2="0" y2="1"><stop offset="0" stop-color="#ffcb00"/><stop offset="0.05" stop-color="#ffca00"/><stop offset="0.1" stop-color="#ffca00"/><stop offset="0.18" stop-color="#ffc900"/><stop offset="0.3" stop-color="#ffc900"/><stop offset="0.5" stop-color="#ffc800"/><stop offset="0.74" stop-color="#ffc700"/><stop offset="1" stop-color="#ffc700"/></linearGradient><linearGradient id="s142" x1="0" y1="0" x2="0" y2="1"><stop offset="0" stop-color="#ffcb00"/><stop offset="0.05" stop-color="#ffca00"/><stop offset="0.1" stop-color="#ffc900"/><stop offset="0.18" stop-color="#ffc800"/><stop offset="0.3" stop-color="#ffc700"/><stop offset="0.5" stop-color="#ffc500"/><stop offset="0.74" stop-color="#ffc400"/><stop offset="1" stop-color="#ffc300"/></linearGradient><linearGradient id="s143" x1="0" y1="0" x2="0" y2="1"><stop offset="0" stop-color="#ffcb00"/><stop offset="0.05" stop-color="#ffc900"/><stop offset="0.1" stop-color="#ffc800"/><stop offset="0.18" stop-color="#ffc700"/><stop offset="0.3" stop-color="#ffc500"/><stop offset="0.5" stop-color="#ffc300"/><stop offset="0.74" stop-color="#ffc100"/><stop offset="1" stop-color="#ffc000"/></linearGradient><linearGradient id="s144" x1="0" y1="0" x2="0" y2="1"><stop offset="0" stop-color="#ffcb00"/><stop offset="0.05" stop-color="#ffc900"/><stop offset="0.1" stop-color="#ffc700"/><stop offset="0.18" stop-color="#ffc500"/><stop offset="0.3" stop-color="#ffc300"/><stop offset="0.5" stop-color="#ffc000"/><stop offset="0.74" stop-color="#ffbe00"/><stop offset="1" stop-color="#ffbc00"/></linearGradient><linearGradient id="s145" x1="0" y1="0" x2="0" y2="1"><stop offset="0" stop-color="#ffcb00"/><stop offset="0.05" stop-color="#ffc800"/><stop offset="0.1" stop-color="#ffc600"/><stop offset="0.18" stop-color="#ffc400"/><stop offset="0.3" stop-color="#ffc100"/><stop offset="0.5" stop-color="#ffbd00"/><stop offset="0.74" stop-color="#ffba00"/><stop offset="1" stop-color="#ffb800"/></linearGradient><linearGradient id="s146" x1="0" y1="0" x2="0" y2="1"><stop offset="0" stop-color="#ffcb00"/><stop offset="0.05" stop-color="#ffc800"/><stop offset="0.1" stop-color="#ffc500"/><stop offset="0.18" stop-color="#ffc200"/><stop offset="0.3" stop-color="#ffbf00"/><stop offset="0.5" stop-color="#ffbb00"/><stop offset="0.74" stop-color="#ffb700"/><stop offset="1" stop-color="#ffb500"/></linearGradient><linearGradient id="s147" x1="0" y1="0" x2="0" y2="1"><stop offset="0" stop-color="#ffcb00"/><stop offset="0.05" stop-color="#ffc700"/><stop offset="0.1" stop-color="#ffc400"/><stop offset="0.18" stop-color="#ffc100"/><stop offset="0.3" stop-color="#ffbd00"/><stop offset="0.5" stop-color="#ffb800"/><stop offset="0.74" stop-color="#ffb400"/><stop offset="1" stop-color="#ffb100"/></linearGradient><linearGradient id="s148" x1="0" y1="0" x2="0" y2="1"><stop offset="0" stop-color="#ffcb00"/><stop offset="0.05" stop-color="#ffc700"/><stop offset="0.1" stop-color="#ffc300"/><stop offset="0.18" stop-color="#ffc000"/><stop offset="0.3" stop-color="#ffbb00"/><stop offset="0.5" stop-color="#ffb500"/><stop offset="0.74" stop-color="#ffb000"/><stop offset="1" stop-color="#ffad00"/></linearGradient><linearGradient id="s149" x1="0" y1="0" x2="0" y2="1"><stop offset="0" stop-color="#ffcb00"/><stop offset="0.05" stop-color="#ffc600"/><stop offset="0.1" stop-color="#ffc200"/><stop offset="0.18" stop-color="#ffbe00"/><stop offset="0.3" stop-color="#ffb900"/><stop offset="0.5" stop-color="#ffb300"/><stop offset="0.74" stop-color="#ffad00"/><stop offset="1" stop-color="#ffa900"/></linearGradient><linearGradient id="s150" x1="0" y1="0" x2="0" y2="1"><stop offset="0" stop-color="#ffcb00"/><stop offset="0.05" stop-color="#ffc500"/><stop offset="0.1" stop-color="#ffc100"/><stop offset="0.18" stop-color="#ffbd00"/><stop offset="0.3" stop-color="#ffb700"/><stop offset="0.5" stop-color="#ffb000"/><stop offset="0.74" stop-color="#ffaa00"/><stop offset="1" stop-color="#ffa500"/></linearGradient><linearGradient id="s151" x1="0" y1="0" x2="0" y2="1"><stop offset="0" stop-color="#ffcb00"/><stop offset="0.05" stop-color="#ffc500"/><stop offset="0.1" stop-color="#ffc000"/><stop offset="0.18" stop-color="#ffbb00"/><stop offset="0.3" stop-color="#ffb500"/><stop offset="0.5" stop-color="#ffad00"/><stop offset="0.74" stop-color="#ffa600"/><stop offset="1" stop-color="#ffa200"/></linearGradient><linearGradient id="s152" x1="0" y1="0" x2="0" y2="1"><stop offset="0" stop-color="#ffcb00"/><stop offset="0.05" stop-color="#ffc400"/><stop offset="0.1" stop-color="#ffbf00"/><stop offset="0.18" stop-color="#ffba00"/><stop offset="0.3" stop-color="#ffb300"/><stop offset="0.5" stop-color="#ffaa00"/><stop offset="0.74" stop-color="#ffa300"/><stop offset="1" stop-color="#ff9e00"/></linearGradient><linearGradient id="s153" x1="0" y1="0" x2="0" y2="1"><stop offset="0" stop-color="#ffcb00"/><stop offset="0.05" stop-color="#ffc400"/><stop offset="0.1" stop-color="#ffbe00"/><stop offset="0.18" stop-color="#ffb900"/><stop offset="0.3" stop-color="#ffb100"/><stop offset="0.5" stop-color="#ffa700"/><stop offset="0.74" stop-color="#ff9f00"/><stop offset="1" stop-color="#ff9a00"/></linearGradient><linearGradient id="s154" x1="0" y1="0" x2="0" y2="1"><stop offset="0" stop-color="#ffcb00"/><stop offset="0.05" stop-color="#ffc300"/><stop offset="0.1" stop-color="#ffbd00"/><stop offset="0.18" stop-color="#ffb700"/><stop offset="0.3" stop-color="#ffaf00"/><stop offset="0.5" stop-color="#ffa400"/><stop offset="0.74" stop-color="#ff9c00"/><stop offset="1" stop-color="#ff9600"/></linearGradient><linearGradient id="s155" x1="0" y1="0" x2="0" y2="1"><stop offset="0" stop-color="#ffcb00"/><stop offset="0.05" stop-color="#ffc300"/><stop offset="0.1" stop-color="#ffbc00"/><stop offset="0.18" stop-color="#ffb500"/><stop offset="0.3" stop-color="#ffad00"/><stop offset="0.5" stop-color="#ffa100"/><stop offset="0.74" stop-color="#ff9800"/><stop offset="1" stop-color="#ff9100"/></linearGradient><linearGradient id="s156" x1="0" y1="0" x2="0" y2="1"><stop offset="0" stop-color="#ffcb00"/><stop offset="0.05" stop-color="#ffc200"/><stop offset="0.1" stop-color="#ffbb00"/><stop offset="0.18" stop-color="#ffb400"/><stop offset="0.3" stop-color="#ffaa00"/><stop offset="0.5" stop-color="#ff9e00"/><stop offset="0.74" stop-color="#ff9400"/><stop offset="1" stop-color="#ff8c00"/></linearGradient><linearGradient id="s157" x1="0" y1="0" x2="0" y2="1"><stop offset="0" stop-color="#ffcb00"/><stop offset="0.05" stop-color="#ffc100"/><stop offset="0.1" stop-color="#ffba00"/><stop offset="0.18" stop-color="#ffb200"/><stop offset="0.3" stop-color="#ffa800"/><stop offset="0.5" stop-color="#ff9a00"/><stop offset="0.74" stop-color="#ff8f00"/><stop offset="1" stop-color="#ff8800"/></linearGradient><linearGradient id="s158" x1="0" y1="0" x2="0" y2="1"><stop offset="0" stop-color="#ffcb00"/><stop offset="0.05" stop-color="#ffc100"/><stop offset="0.1" stop-color="#ffb900"/><stop offset="0.18" stop-color="#ffb000"/><stop offset="0.3" stop-color="#ffa500"/><stop offset="0.5" stop-color="#ff9700"/><stop offset="0.74" stop-color="#ff8b00"/><stop offset="1" stop-color="#ff8300"/></linearGradient><linearGradient id="s159" x1="0" y1="0" x2="0" y2="1"><stop offset="0" stop-color="#ffcb00"/><stop offset="0.05" stop-color="#ffc000"/><stop offset="0.1" stop-color="#ffb800"/><stop offset="0.18" stop-color="#ffae00"/><stop offset="0.3" stop-color="#ffa300"/><stop offset="0.5" stop-color="#ff9400"/><stop offset="0.74" stop-color="#ff8700"/><stop offset="1" stop-color="#ff7e00"/></linearGradient><linearGradient id="s160" x1="0" y1="0" x2="0" y2="1"><stop offset="0" stop-color="#ffcb00"/><stop offset="0.05" stop-color="#ffbf00"/><stop offset="0.1" stop-color="#ffb600"/><stop offset="0.18" stop-color="#ffad00"/><stop offset="0.3" stop-color="#ffa100"/><stop offset="0.5" stop-color="#ff9000"/><stop offset="0.74" stop-color="#ff8300"/><stop offset="1" stop-color="#ff7a00"/></linearGradient><linearGradient id="s161" x1="0" y1="0" x2="0" y2="1"><stop offset="0" stop-color="#ffcb00"/><stop offset="0.05" stop-color="#ffbf00"/><stop offset="0.1" stop-color="#ffb600"/><stop offset="0.18" stop-color="#ffab00"/><stop offset="0.3" stop-color="#ff9f00"/><stop offset="0.5" stop-color="#ff8e00"/><stop offset="0.74" stop-color="#ff8000"/><stop offset="1" stop-color="#ff7600"/></linearGradient><linearGradient id="s162" x1="0" y1="0" x2="0" y2="1"><stop offset="0" stop-color="#ffcb00"/><stop offset="0.05" stop-color="#ffbe00"/><stop offset="0.1" stop-color="#ffb500"/><stop offset="0.18" stop-color="#ffaa00"/><stop offset="0.3" stop-color="#ff9d00"/><stop offset="0.5" stop-color="#ff8b00"/><stop offset="0.74" stop-color="#ff7d00"/><stop offset="1" stop-color="#ff7300"/></linearGradient><linearGradient id="s163" x1="0" y1="0" x2="0" y2="1"><stop offset="0" stop-color="#ffcb00"/><stop offset="0.05" stop-color="#ffbe00"/><stop offset="0.1" stop-color="#ffb400"/><stop offset="0.18" stop-color="#ffa900"/><stop offset="0.3" stop-color="#ff9b00"/><stop offset="0.5" stop-color="#ff8900"/><stop offset="0.74" stop-color="#ff7a00"/><stop offset="1" stop-color="#ff6f00"/></linearGradient><linearGradient id="s164" x1="0" y1="0" x2="0" y2="1"><stop offset="0" stop-color="#ffcb00"/><stop offset="0.05" stop-color="#ffbd00"/><stop offset="0.1" stop-color="#ffb300"/><stop offset="0.18" stop-color="#ffa800"/><stop offset="0.3" stop-color="#ff9900"/><stop offset="0.5" stop-color="#ff8700"/><stop offset="0.74" stop-color="#ff7700"/><stop offset="1" stop-color="#ff6c00"/></linearGradient><linearGradient id="s165" x1="0" y1="0" x2="0" y2="1"><stop offset="0" stop-color="#ffcb00"/><stop offset="0.05" stop-color="#ffbd00"/><stop offset="0.1" stop-color="#ffb200"/><stop offset="0.18" stop-color="#ffa600"/><stop offset="0.3" stop-color="#ff9800"/><stop offset="0.5" stop-color="#ff8400"/><stop offset="0.74" stop-color="#ff7400"/><stop offset="1" stop-color="#ff6900"/></linearGradient><linearGradient id="s166" x1="0" y1="0" x2="0" y2="1"><stop offset="0" stop-color="#ffcb00"/><stop offset="0.05" stop-color="#ffbd00"/><stop offset="0.1" stop-color="#ffb100"/><stop offset="0.18" stop-color="#ffa500"/><stop offset="0.3" stop-color="#ff9600"/><stop offset="0.5" stop-color="#ff8200"/><stop offset="0.74" stop-color="#ff7100"/><stop offset="1" stop-color="#ff6600"/></linearGradient><linearGradient id="s167" x1="0" y1="0" x2="0" y2="1"><stop offset="0" stop-color="#ffcb00"/><stop offset="0.05" stop-color="#ffbc00"/><stop offset="0.1" stop-color="#ffb100"/><stop offset="0.18" stop-color="#ffa400"/><stop offset="0.3" stop-color="#ff9500"/><stop offset="0.5" stop-color="#ff8000"/><stop offset="0.74" stop-color="#ff6f00"/><stop offset="1" stop-color="#ff6300"/></linearGradient><linearGradient id="s168" x1="0" y1="0" x2="0" y2="1"><stop offset="0" stop-color="#ffcb00"/><stop offset="0.05" stop-color="#ffbc00"/><stop offset="0.1" stop-color="#ffb000"/><stop offset="0.18" stop-color="#ffa300"/><stop offset="0.3" stop-color="#ff9300"/><stop offset="0.5" stop-color="#ff7e00"/><stop offset="0.74" stop-color="#ff6c00"/><stop offset="1" stop-color="#ff6000"/></linearGradient><linearGradient id="s169" x1="0" y1="0" x2="0" y2="1"><stop offset="0" stop-color="#ffcb00"/><stop offset="0.05" stop-color="#ffbb00"/><stop offset="0.1" stop-color="#ffaf00"/><stop offset="0.18" stop-color="#ffa200"/><stop offset="0.3" stop-color="#ff9200"/><stop offset="0.5" stop-color="#ff7c00"/><stop offset="0.74" stop-color="#ff6a00"/><stop offset="1" stop-color="#ff5e00"/></linearGradient><linearGradient id="s170" x1="0" y1="0" x2="0" y2="1"><stop offset="0" stop-color="#ffcb00"/><stop offset="0.05" stop-color="#ffbb00"/><stop offset="0.1" stop-color="#ffaf00"/><stop offset="0.18" stop-color="#ffa100"/><stop offset="0.3" stop-color="#ff9100"/><stop offset="0.5" stop-color="#ff7b00"/><stop offset="0.74" stop-color="#ff6800"/><stop offset="1" stop-color="#ff5b00"/></linearGradient><linearGradient id="s171" x1="0" y1="0" x2="0" y2="1"><stop offset="0" stop-color="#ffcb00"/><stop offset="0.05" stop-color="#ffbb00"/><stop offset="0.1" stop-color="#ffae00"/><stop offset="0.18" stop-color="#ffa100"/><stop offset="0.3" stop-color="#ff9000"/><stop offset="0.5" stop-color="#ff7900"/><stop offset="0.74" stop-color="#ff6700"/><stop offset="1" stop-color="#ff5900"/></linearGradient><linearGradient id="s172" x1="0" y1="0" x2="0" y2="1"><stop offset="0" stop-color="#ffcb00"/><stop offset="0.05" stop-color="#ffbb00"/><stop offset="0.1" stop-color="#ffae00"/><stop offset="0.18" stop-color="#ffa000"/><stop offset="0.3" stop-color="#ff8f00"/><stop offset="0.5" stop-color="#ff7800"/><stop offset="0.74" stop-color="#ff6500"/><stop offset="1" stop-color="#ff5800"/></linearGradient><linearGradient id="s173" x1="0" y1="0" x2="0" y2="1"><stop offset="0" stop-color="#ffcb00"/><stop offset="0.05" stop-color="#ffba00"/><stop offset="0.1" stop-color="#ffae00"/><stop offset="0.18" stop-color="#ffa000"/><stop offset="0.3" stop-color="#ff8e00"/><stop offset="0.5" stop-color="#ff7700"/><stop offset="0.74" stop-color="#ff6400"/><stop offset="1" stop-color="#ff5700"/></linearGradient><linearGradient id="s174" x1="0" y1="0" x2="0" y2="1"><stop offset="0" stop-color="#ffcb00"/><stop offset="0.05" stop-color="#ffba00"/><stop offset="0.1" stop-color="#ffad00"/><stop offset="0.18" stop-color="#ff9f00"/><stop offset="0.3" stop-color="#ff8e00"/><stop offset="0.5" stop-color="#ff7700"/><stop offset="0.74" stop-color="#ff6300"/><stop offset="1" stop-color="#ff5600"/></linearGradient><linearGradient id="s175" x1="0" y1="0" x2="0" y2="1"><stop offset="0" stop-color="#ffcb00"/><stop offset="0.05" stop-color="#ffba00"/><stop offset="0.1" stop-color="#ffad00"/><stop offset="0.18" stop-color="#ff9f00"/><stop offset="0.3" stop-color="#ff8e00"/><stop offset="0.5" stop-color="#ff7600"/><stop offset="0.74" stop-color="#ff6300"/><stop offset="1" stop-color="#ff5500"/></linearGradient><linearGradient id="s176" x1="0" y1="0" x2="0" y2="1"><stop offset="0" stop-color="#ffcb00"/><stop offset="0.05" stop-color="#ffba00"/><stop offset="0.1" stop-color="#ffad00"/><stop offset="0.18" stop-color="#ff9f00"/><stop offset="0.3" stop-color="#ff8d00"/><stop offset="0.5" stop-color="#ff7600"/><stop offset="0.74" stop-color="#ff6200"/><stop offset="1" stop-color="#ff5500"/></linearGradient><linearGradient id="s177" x1="0" y1="0" x2="0" y2="1"><stop offset="0" stop-color="#ffcb00"/><stop offset="0.05" stop-color="#ffba00"/><stop offset="0.1" stop-color="#ffad00"/><stop offset="0.18" stop-color="#ff9f00"/><stop offset="0.3" stop-color="#ff8d00"/><stop offset="0.5" stop-color="#ff7500"/><stop offset="0.74" stop-color="#ff6200"/><stop offset="1" stop-color="#ff5400"/></linearGradient><linearGradient id="s178" x1="0" y1="0" x2="0" y2="1"><stop offset="0" stop-color="#ffcb00"/><stop offset="0.05" stop-color="#ffba00"/><stop offset="0.1" stop-color="#ffad00"/><stop offset="0.18" stop-color="#ff9f00"/><stop offset="0.3" stop-color="#ff8d00"/><stop offset="0.5" stop-color="#ff7500"/><stop offset="0.74" stop-color="#ff6200"/><stop offset="1" stop-color="#ff5400"/></linearGradient><linearGradient id="s179" x1="0" y1="0" x2="0" y2="1"><stop offset="0" stop-color="#ffcb00"/><stop offset="0.05" stop-color="#ffba00"/><stop offset="0.1" stop-color="#ffad00"/><stop offset="0.18" stop-color="#ff9e00"/><stop offset="0.3" stop-color="#ff8d00"/><stop offset="0.5" stop-color="#ff7500"/><stop offset="0.74" stop-color="#ff6100"/><stop offset="1" stop-color="#ff5300"/></linearGradient><linearGradient id="s180" x1="0" y1="0" x2="0" y2="1"><stop offset="0" stop-color="#ffcb00"/><stop offset="0.05" stop-color="#ffba00"/><stop offset="0.1" stop-color="#ffad00"/><stop offset="0.18" stop-color="#ff9e00"/><stop offset="0.3" stop-color="#ff8c00"/><stop offset="0.5" stop-color="#ff7400"/><stop offset="0.74" stop-color="#ff6100"/><stop offset="1" stop-color="#ff5300"/></linearGradient><linearGradient id="s181" x1="0" y1="0" x2="0" y2="1"><stop offset="0" stop-color="#ffcb00"/><stop offset="0.05" stop-color="#ffba00"/><stop offset="0.1" stop-color="#ffac00"/><stop offset="0.18" stop-color="#ff9e00"/><stop offset="0.3" stop-color="#ff8c00"/><stop offset="0.5" stop-color="#ff7400"/><stop offset="0.74" stop-color="#ff6000"/><stop offset="1" stop-color="#ff5200"/></linearGradient><linearGradient id="s182" x1="0" y1="0" x2="0" y2="1"><stop offset="0" stop-color="#ffcb00"/><stop offset="0.05" stop-color="#ffba00"/><stop offset="0.1" stop-color="#ffac00"/><stop offset="0.18" stop-color="#ff9e00"/><stop offset="0.3" stop-color="#ff8b00"/><stop offset="0.5" stop-color="#ff7300"/><stop offset="0.74" stop-color="#ff5f00"/><stop offset="1" stop-color="#ff5100"/></linearGradient><linearGradient id="s183" x1="0" y1="0" x2="0" y2="1"><stop offset="0" stop-color="#ffcb00"/><stop offset="0.05" stop-color="#ffb900"/><stop offset="0.1" stop-color="#ffac00"/><stop offset="0.18" stop-color="#ff9d00"/><stop offset="0.3" stop-color="#ff8b00"/><stop offset="0.5" stop-color="#ff7200"/><stop offset="0.74" stop-color="#ff5e00"/><stop offset="1" stop-color="#ff5000"/></linearGradient><linearGradient id="s184" x1="0" y1="0" x2="0" y2="1"><stop offset="0" stop-color="#ffcb00"/><stop offset="0.05" stop-color="#ffb900"/><stop offset="0.1" stop-color="#ffac00"/><stop offset="0.18" stop-color="#ff9d00"/><stop offset="0.3" stop-color="#ff8a00"/><stop offset="0.5" stop-color="#ff7100"/><stop offset="0.74" stop-color="#ff5d00"/><stop offset="1" stop-color="#ff4e00"/></linearGradient><linearGradient id="s185" x1="0" y1="0" x2="0" y2="1"><stop offset="0" stop-color="#ffcb00"/><stop offset="0.05" stop-color="#ffb900"/><stop offset="0.1" stop-color="#ffab00"/><stop offset="0.18" stop-color="#ff9c00"/><stop offset="0.3" stop-color="#ff8900"/><stop offset="0.5" stop-color="#ff7000"/><stop offset="0.74" stop-color="#ff5b00"/><stop offset="1" stop-color="#ff4c00"/></linearGradient><linearGradient id="s186" x1="0" y1="0" x2="0" y2="1"><stop offset="0" stop-color="#ffcb00"/><stop offset="0.05" stop-color="#ffb900"/><stop offset="0.1" stop-color="#ffab00"/><stop offset="0.18" stop-color="#ff9b00"/><stop offset="0.3" stop-color="#ff8800"/><stop offset="0.5" stop-color="#ff6e00"/><stop offset="0.74" stop-color="#ff5900"/><stop offset="1" stop-color="#ff4a00"/></linearGradient><linearGradient id="s187" x1="0" y1="0" x2="0" y2="1"><stop offset="0" stop-color="#ffcb00"/><stop offset="0.05" stop-color="#ffb800"/><stop offset="0.1" stop-color="#ffaa00"/><stop offset="0.18" stop-color="#ff9a00"/><stop offset="0.3" stop-color="#ff8700"/><stop offset="0.5" stop-color="#ff6d00"/><stop offset="0.74" stop-color="#ff5700"/><stop offset="1" stop-color="#ff4800"/></linearGradient><linearGradient id="s188" x1="0" y1="0" x2="0" y2="1"><stop offset="0" stop-color="#ffcb00"/><stop offset="0.05" stop-color="#ffb800"/><stop offset="0.1" stop-color="#ffa900"/><stop offset="0.18" stop-color="#ff9900"/><stop offset="0.3" stop-color="#ff8500"/><stop offset="0.5" stop-color="#ff6b00"/><stop offset="0.74" stop-color="#ff5500"/><stop offset="1" stop-color="#ff4600"/></linearGradient><linearGradient id="s189" x1="0" y1="0" x2="0" y2="1"><stop offset="0" stop-color="#ffcb00"/><stop offset="0.05" stop-color="#ffb800"/><stop offset="0.1" stop-color="#ffa900"/><stop offset="0.18" stop-color="#ff9800"/><stop offset="0.3" stop-color="#ff8400"/><stop offset="0.5" stop-color="#ff6900"/><stop offset="0.74" stop-color="#ff5300"/><stop offset="1" stop-color="#ff4300"/></linearGradient><linearGradient id="s190" x1="0" y1="0" x2="0" y2="1"><stop offset="0" stop-color="#ffcb00"/><stop offset="0.05" stop-color="#ffb700"/><stop offset="0.1" stop-color="#ffa800"/><stop offset="0.18" stop-color="#ff9700"/><stop offset="0.3" stop-color="#ff8300"/><stop offset="0.5" stop-color="#ff6700"/><stop offset="0.74" stop-color="#ff5000"/><stop offset="1" stop-color="#ff4000"/></linearGradient><linearGradient id="s191" x1="0" y1="0" x2="0" y2="1"><stop offset="0" stop-color="#ffcb00"/><stop offset="0.05" stop-color="#ffb700"/><stop offset="0.1" stop-color="#ffa700"/><stop offset="0.18" stop-color="#ff9600"/><stop offset="0.3" stop-color="#ff8100"/><stop offset="0.5" stop-color="#ff6500"/><stop offset="0.74" stop-color="#ff4e00"/><stop offset="1" stop-color="#ff3d00"/></linearGradient><linearGradient id="s192" x1="0" y1="0" x2="0" y2="1"><stop offset="0" stop-color="#ffcb00"/><stop offset="0.05" stop-color="#ffb600"/><stop offset="0.1" stop-color="#ffa700"/><stop offset="0.18" stop-color="#ff9500"/><stop offset="0.3" stop-color="#ff8000"/><stop offset="0.5" stop-color="#ff6300"/><stop offset="0.74" stop-color="#ff4b00"/><stop offset="1" stop-color="#ff3a00"/></linearGradient><linearGradient id="s193" x1="0" y1="0" x2="0" y2="1"><stop offset="0" stop-color="#ffcb00"/><stop offset="0.05" stop-color="#ffb600"/><stop offset="0.1" stop-color="#ffa600"/><stop offset="0.18" stop-color="#ff9400"/><stop offset="0.3" stop-color="#ff7e00"/><stop offset="0.5" stop-color="#ff6100"/><stop offset="0.74" stop-color="#ff4900"/><stop offset="1" stop-color="#ff3800"/></linearGradient><linearGradient id="s194" x1="0" y1="0" x2="0" y2="1"><stop offset="0" stop-color="#ffcb00"/><stop offset="0.05" stop-color="#ffb600"/><stop offset="0.1" stop-color="#ffa500"/><stop offset="0.18" stop-color="#ff9300"/><stop offset="0.3" stop-color="#ff7d00"/><stop offset="0.5" stop-color="#ff5f00"/><stop offset="0.74" stop-color="#ff4600"/><stop offset="1" stop-color="#ff3500"/></linearGradient><linearGradient id="s195" x1="0" y1="0" x2="0" y2="1"><stop offset="0" stop-color="#ffcb00"/><stop offset="0.05" stop-color="#ffb500"/><stop offset="0.1" stop-color="#ffa400"/><stop offset="0.18" stop-color="#ff9200"/><stop offset="0.3" stop-color="#ff7b00"/><stop offset="0.5" stop-color="#ff5d00"/><stop offset="0.74" stop-color="#ff4400"/><stop offset="1" stop-color="#ff3200"/></linearGradient><linearGradient id="s196" x1="0" y1="0" x2="0" y2="1"><stop offset="0" stop-color="#ffcb00"/><stop offset="0.05" stop-color="#ffb500"/><stop offset="0.1" stop-color="#ffa400"/><stop offset="0.18" stop-color="#ff9100"/><stop offset="0.3" stop-color="#ff7a00"/><stop offset="0.5" stop-color="#ff5b00"/><stop offset="0.74" stop-color="#ff4100"/><stop offset="1" stop-color="#ff2f00"/></linearGradient><linearGradient id="s197" x1="0" y1="0" x2="0" y2="1"><stop offset="0" stop-color="#ffcb00"/><stop offset="0.05" stop-color="#ffb500"/><stop offset="0.1" stop-color="#ffa300"/><stop offset="0.18" stop-color="#ff9000"/><stop offset="0.3" stop-color="#ff7800"/><stop offset="0.5" stop-color="#ff5900"/><stop offset="0.74" stop-color="#ff3f00"/><stop offset="1" stop-color="#ff2c00"/></linearGradient><linearGradient id="s198" x1="0" y1="0" x2="0" y2="1"><stop offset="0" stop-color="#ffcb00"/><stop offset="0.05" stop-color="#ffb400"/><stop offset="0.1" stop-color="#ffa200"/><stop offset="0.18" stop-color="#ff8f00"/><stop offset="0.3" stop-color="#ff7700"/><stop offset="0.5" stop-color="#ff5700"/><stop offset="0.74" stop-color="#ff3c00"/><stop offset="1" stop-color="#ff2900"/></linearGradient><linearGradient id="s199" x1="0" y1="0" x2="0" y2="1"><stop offset="0" stop-color="#ffcb00"/><stop offset="0.05" stop-color="#ffb400"/><stop offset="0.1" stop-color="#ffa200"/><stop offset="0.18" stop-color="#ff8e00"/><stop offset="0.3" stop-color="#ff7500"/><stop offset="0.5" stop-color="#ff5400"/><stop offset="0.74" stop-color="#ff3900"/><stop offset="1" stop-color="#ff2600"/></linearGradient><linearGradient id="s200" x1="0" y1="0" x2="0" y2="1"><stop offset="0" stop-color="#ffcb00"/><stop offset="0.05" stop-color="#ffb300"/><stop offset="0.1" stop-color="#ffa100"/><stop offset="0.18" stop-color="#ff8d00"/><stop offset="0.3" stop-color="#ff7400"/><stop offset="0.5" stop-color="#ff5200"/><stop offset="0.74" stop-color="#ff3700"/><stop offset="1" stop-color="#ff2300"/></linearGradient><linearGradient id="s201" x1="0" y1="0" x2="0" y2="1"><stop offset="0" stop-color="#ffcb00"/><stop offset="0.05" stop-color="#ffb300"/><stop offset="0.1" stop-color="#ffa000"/><stop offset="0.18" stop-color="#ff8c00"/><stop offset="0.3" stop-color="#ff7200"/><stop offset="0.5" stop-color="#ff5000"/><stop offset="0.74" stop-color="#ff3400"/><stop offset="1" stop-color="#ff2000"/></linearGradient><linearGradient id="s202" x1="0" y1="0" x2="0" y2="1"><stop offset="0" stop-color="#ffcb00"/><stop offset="0.05" stop-color="#ffb200"/><stop offset="0.1" stop-color="#ff9f00"/><stop offset="0.18" stop-color="#ff8a00"/><stop offset="0.3" stop-color="#ff7000"/><stop offset="0.5" stop-color="#ff4d00"/><stop offset="0.74" stop-color="#ff3100"/><stop offset="1" stop-color="#ff1d00"/></linearGradient><linearGradient id="s203" x1="0" y1="0" x2="0" y2="1"><stop offset="0" stop-color="#ffcb00"/><stop offset="0.05" stop-color="#ffb200"/><stop offset="0.1" stop-color="#ff9e00"/><stop offset="0.18" stop-color="#ff8900"/><stop offset="0.3" stop-color="#ff6f00"/><stop offset="0.5" stop-color="#ff4b00"/><stop offset="0.74" stop-color="#ff2e00"/><stop offset="1" stop-color="#ff1a00"/></linearGradient><linearGradient id="s204" x1="0" y1="0" x2="0" y2="1"><stop offset="0" stop-color="#ffcb00"/><stop offset="0.05" stop-color="#ffb100"/><stop offset="0.1" stop-color="#ff9e00"/><stop offset="0.18" stop-color="#ff8800"/><stop offset="0.3" stop-color="#ff6d00"/><stop offset="0.5" stop-color="#ff4900"/><stop offset="0.74" stop-color="#ff2c00"/><stop offset="1" stop-color="#ff1700"/></linearGradient><linearGradient id="s205" x1="0" y1="0" x2="0" y2="1"><stop offset="0" stop-color="#ffcb00"/><stop offset="0.05" stop-color="#ffb100"/><stop offset="0.1" stop-color="#ff9d00"/><stop offset="0.18" stop-color="#ff8700"/><stop offset="0.3" stop-color="#ff6c00"/><stop offset="0.5" stop-color="#ff4700"/><stop offset="0.74" stop-color="#ff2900"/><stop offset="1" stop-color="#ff1400"/></linearGradient><linearGradient id="s206" x1="0" y1="0" x2="0" y2="1"><stop offset="0" stop-color="#ffcb00"/><stop offset="0.05" stop-color="#ffb100"/><stop offset="0.1" stop-color="#ff9c00"/><stop offset="0.18" stop-color="#ff8600"/><stop offset="0.3" stop-color="#ff6a00"/><stop offset="0.5" stop-color="#ff4500"/><stop offset="0.74" stop-color="#ff2700"/><stop offset="1" stop-color="#ff1100"/></linearGradient><linearGradient id="s207" x1="0" y1="0" x2="0" y2="1"><stop offset="0" stop-color="#ffcb00"/><stop offset="0.05" stop-color="#ffb000"/><stop offset="0.1" stop-color="#ff9c00"/><stop offset="0.18" stop-color="#ff8500"/><stop offset="0.3" stop-color="#ff6900"/><stop offset="0.5" stop-color="#ff4300"/><stop offset="0.74" stop-color="#ff2500"/><stop offset="1" stop-color="#ff0f00"/></linearGradient><linearGradient id="s208" x1="0" y1="0" x2="0" y2="1"><stop offset="0" stop-color="#ffcb00"/><stop offset="0.05" stop-color="#ffb000"/><stop offset="0.1" stop-color="#ff9b00"/><stop offset="0.18" stop-color="#ff8500"/><stop offset="0.3" stop-color="#ff6800"/><stop offset="0.5" stop-color="#ff4200"/><stop offset="0.74" stop-color="#ff2300"/><stop offset="1" stop-color="#ff0d00"/></linearGradient><linearGradient id="s209" x1="0" y1="0" x2="0" y2="1"><stop offset="0" stop-color="#ffcb00"/><stop offset="0.05" stop-color="#ffb000"/><stop offset="0.1" stop-color="#ff9b00"/><stop offset="0.18" stop-color="#ff8400"/><stop offset="0.3" stop-color="#ff6700"/><stop offset="0.5" stop-color="#ff4100"/><stop offset="0.74" stop-color="#ff2200"/><stop offset="1" stop-color="#ff0c00"/></linearGradient><linearGradient id="s210" x1="0" y1="0" x2="0" y2="1"><stop offset="0" stop-color="#ffcb00"/><stop offset="0.05" stop-color="#ffb000"/><stop offset="0.1" stop-color="#ff9b00"/><stop offset="0.18" stop-color="#ff8400"/><stop offset="0.3" stop-color="#ff6700"/><stop offset="0.5" stop-color="#ff4000"/><stop offset="0.74" stop-color="#ff2100"/><stop offset="1" stop-color="#ff0a00"/></linearGradient><linearGradient id="s211" x1="0" y1="0" x2="0" y2="1"><stop offset="0" stop-color="#ffcb00"/><stop offset="0.05" stop-color="#ffb000"/><stop offset="0.1" stop-color="#ff9a00"/><stop offset="0.18" stop-color="#ff8300"/><stop offset="0.3" stop-color="#ff6600"/><stop offset="0.5" stop-color="#ff3f00"/><stop offset="0.74" stop-color="#ff2000"/><stop offset="1" stop-color="#ff0900"/></linearGradient><linearGradient id="s212" x1="0" y1="0" x2="0" y2="1"><stop offset="0" stop-color="#ffcb00"/><stop offset="0.05" stop-color="#ffaf00"/><stop offset="0.1" stop-color="#ff9a00"/><stop offset="0.18" stop-color="#ff8300"/><stop offset="0.3" stop-color="#ff6500"/><stop offset="0.5" stop-color="#ff3e00"/><stop offset="0.74" stop-color="#ff1e00"/><stop offset="1" stop-color="#ff0800"/></linearGradient><linearGradient id="s213" x1="0" y1="0" x2="0" y2="1"><stop offset="0" stop-color="#ffcb00"/><stop offset="0.05" stop-color="#ffaf00"/><stop offset="0.1" stop-color="#ff9a00"/><stop offset="0.18" stop-color="#ff8200"/><stop offset="0.3" stop-color="#ff6500"/><stop offset="0.5" stop-color="#ff3e00"/><stop offset="0.74" stop-color="#ff1e00"/><stop offset="1" stop-color="#ff0700"/></linearGradient><linearGradient id="s214" x1="0" y1="0" x2="0" y2="1"><stop offset="0" stop-color="#ffcb00"/><stop offset="0.05" stop-color="#ffaf00"/><stop offset="0.1" stop-color="#ff9900"/><stop offset="0.18" stop-color="#ff8200"/><stop offset="0.3" stop-color="#ff6400"/><stop offset="0.5" stop-color="#ff3d00"/><stop offset="0.74" stop-color="#ff1d00"/><stop offset="1" stop-color="#ff0600"/></linearGradient><linearGradient id="s215" x1="0" y1="0" x2="0" y2="1"><stop offset="0" stop-color="#ffcb00"/><stop offset="0.05" stop-color="#ffaf00"/><stop offset="0.1" stop-color="#ff9900"/><stop offset="0.18" stop-color="#ff8100"/><stop offset="0.3" stop-color="#ff6400"/><stop offset="0.5" stop-color="#ff3c00"/><stop offset="0.74" stop-color="#ff1c00"/><stop offset="1" stop-color="#ff0500"/></linearGradient><linearGradient id="s216" x1="0" y1="0" x2="0" y2="1"><stop offset="0" stop-color="#ffcb00"/><stop offset="0.05" stop-color="#ffaf00"/><stop offset="0.1" stop-color="#ff9900"/><stop offset="0.18" stop-color="#ff8100"/><stop offset="0.3" stop-color="#ff6300"/><stop offset="0.5" stop-color="#ff3c00"/><stop offset="0.74" stop-color="#ff1b00"/><stop offset="1" stop-color="#ff0400"/></linearGradient><linearGradient id="s217" x1="0" y1="0" x2="0" y2="1"><stop offset="0" stop-color="#ffcb00"/><stop offset="0.05" stop-color="#ffaf00"/><stop offset="0.1" stop-color="#ff9900"/><stop offset="0.18" stop-color="#ff8100"/><stop offset="0.3" stop-color="#ff6300"/><stop offset="0.5" stop-color="#ff3b00"/><stop offset="0.74" stop-color="#ff1a00"/><stop offset="1" stop-color="#ff0300"/></linearGradient><linearGradient id="s218" x1="0" y1="0" x2="0" y2="1"><stop offset="0" stop-color="#ffcb00"/><stop offset="0.05" stop-color="#ffaf00"/><stop offset="0.1" stop-color="#ff9900"/><stop offset="0.18" stop-color="#ff8100"/><stop offset="0.3" stop-color="#ff6300"/><stop offset="0.5" stop-color="#ff3a00"/><stop offset="0.74" stop-color="#ff1a00"/><stop offset="1" stop-color="#ff0200"/></linearGradient><linearGradient id="s219" x1="0" y1="0" x2="0" y2="1"><stop offset="0" stop-color="#ffcb00"/><stop offset="0.05" stop-color="#ffaf00"/><stop offset="0.1" stop-color="#ff9800"/><stop offset="0.18" stop-color="#ff8000"/><stop offset="0.3" stop-color="#ff6200"/><stop offset="0.5" stop-color="#ff3a00"/><stop offset="0.74" stop-color="#ff1900"/><stop offset="1" stop-color="#ff0200"/></linearGradient><linearGradient id="s220" x1="0" y1="0" x2="0" y2="1"><stop offset="0" stop-color="#ffcb00"/><stop offset="0.05" stop-color="#ffae00"/><stop offset="0.1" stop-color="#ff9800"/><stop offset="0.18" stop-color="#ff8000"/><stop offset="0.3" stop-color="#ff6200"/><stop offset="0.5" stop-color="#ff3900"/><stop offset="0.74" stop-color="#ff1800"/><stop offset="1" stop-color="#ff0100"/></linearGradient><linearGradient id="s221" x1="0" y1="0" x2="0" y2="1"><stop offset="0" stop-color="#ffcb00"/><stop offset="0.05" stop-color="#ffae00"/><stop offset="0.1" stop-color="#ff9800"/><stop offset="0.18" stop-color="#ff8000"/><stop offset="0.3" stop-color="#ff6100"/><stop offset="0.5" stop-color="#ff3900"/><stop offset="0.74" stop-color="#ff1800"/><stop offset="1" stop-color="#ff0000"/></linearGradient><linearGradient id="s222" x1="0" y1="0" x2="0" y2="1"><stop offset="0" stop-color="#ffcb00"/><stop offset="0.05" stop-color="#ffae00"/><stop offset="0.1" stop-color="#ff9800"/><stop offset="0.18" stop-color="#ff7f00"/><stop offset="0.3" stop-color="#ff6100"/><stop offset="0.5" stop-color="#ff3800"/><stop offset="0.74" stop-color="#ff1700"/><stop offset="1" stop-color="#fe0000"/></linearGradient><linearGradient id="s223" x1="0" y1="0" x2="0" y2="1"><stop offset="0" stop-color="#ffcb00"/><stop offset="0.05" stop-color="#ffae00"/><stop offset="0.1" stop-color="#ff9800"/><stop offset="0.18" stop-color="#ff7f00"/><stop offset="0.3" stop-color="#ff6000"/><stop offset="0.5" stop-color="#ff3800"/><stop offset="0.74" stop-color="#ff1600"/><stop offset="1" stop-color="#fd0000"/></linearGradient><linearGradient id="s224" x1="0" y1="0" x2="0" y2="1"><stop offset="0" stop-color="#ffcb00"/><stop offset="0.05" stop-color="#ffae00"/><stop offset="0.1" stop-color="#ff9700"/><stop offset="0.18" stop-color="#ff7f00"/><stop offset="0.3" stop-color="#ff6000"/><stop offset="0.5" stop-color="#ff3700"/><stop offset="0.74" stop-color="#ff1500"/><stop offset="1" stop-color="#fc0000"/></linearGradient><linearGradient id="s225" x1="0" y1="0" x2="0" y2="1"><stop offset="0" stop-color="#ffcb00"/><stop offset="0.05" stop-color="#ffae00"/><stop offset="0.1" stop-color="#ff9700"/><stop offset="0.18" stop-color="#ff7e00"/><stop offset="0.3" stop-color="#ff5f00"/><stop offset="0.5" stop-color="#ff3600"/><stop offset="0.74" stop-color="#ff1400"/><stop offset="1" stop-color="#fc0000"/></linearGradient><linearGradient id="s226" x1="0" y1="0" x2="0" y2="1"><stop offset="0" stop-color="#ffcb00"/><stop offset="0.05" stop-color="#ffae00"/><stop offset="0.1" stop-color="#ff9700"/><stop offset="0.18" stop-color="#ff7e00"/><stop offset="0.3" stop-color="#ff5f00"/><stop offset="0.5" stop-color="#ff3600"/><stop offset="0.74" stop-color="#ff1400"/><stop offset="1" stop-color="#fb0000"/></linearGradient><linearGradient id="s227" x1="0" y1="0" x2="0" y2="1"><stop offset="0" stop-color="#ffcb00"/><stop offset="0.05" stop-color="#ffae00"/><stop offset="0.1" stop-color="#ff9700"/><stop offset="0.18" stop-color="#ff7e00"/><stop offset="0.3" stop-color="#ff5e00"/><stop offset="0.5" stop-color="#ff3500"/><stop offset="0.74" stop-color="#ff1300"/><stop offset="1" stop-color="#fa0000"/></linearGradient><linearGradient id="s228" x1="0" y1="0" x2="0" y2="1"><stop offset="0" stop-color="#ffcb00"/><stop offset="0.05" stop-color="#ffad00"/><stop offset="0.1" stop-color="#ff9600"/><stop offset="0.18" stop-color="#ff7d00"/><stop offset="0.3" stop-color="#ff5e00"/><stop offset="0.5" stop-color="#ff3400"/><stop offset="0.74" stop-color="#ff1200"/><stop offset="1" stop-color="#f80000"/></linearGradient><linearGradient id="s229" x1="0" y1="0" x2="0" y2="1"><stop offset="0" stop-color="#ffcb00"/><stop offset="0.05" stop-color="#ffad00"/><stop offset="0.1" stop-color="#ff9600"/><stop offset="0.18" stop-color="#ff7d00"/><stop offset="0.3" stop-color="#ff5d00"/><stop offset="0.5" stop-color="#ff3300"/><stop offset="0.74" stop-color="#ff1100"/><stop offset="1" stop-color="#f70000"/></linearGradient><linearGradient id="s230" x1="0" y1="0" x2="0" y2="1"><stop offset="0" stop-color="#ffcb00"/><stop offset="0.05" stop-color="#ffad00"/><stop offset="0.1" stop-color="#ff9600"/><stop offset="0.18" stop-color="#ff7c00"/><stop offset="0.3" stop-color="#ff5c00"/><stop offset="0.5" stop-color="#ff3200"/><stop offset="0.74" stop-color="#ff0f00"/><stop offset="1" stop-color="#f60000"/></linearGradient><linearGradient id="s231" x1="0" y1="0" x2="0" y2="1"><stop offset="0" stop-color="#ffcb00"/><stop offset="0.05" stop-color="#ffad00"/><stop offset="0.1" stop-color="#ff9500"/><stop offset="0.18" stop-color="#ff7c00"/><stop offset="0.3" stop-color="#ff5c00"/><stop offset="0.5" stop-color="#ff3100"/><stop offset="0.74" stop-color="#ff0e00"/><stop offset="1" stop-color="#f40000"/></linearGradient><linearGradient id="s232" x1="0" y1="0" x2="0" y2="1"><stop offset="0" stop-color="#ffcb00"/><stop offset="0.05" stop-color="#ffad00"/><stop offset="0.1" stop-color="#ff9500"/><stop offset="0.18" stop-color="#ff7b00"/><stop offset="0.3" stop-color="#ff5b00"/><stop offset="0.5" stop-color="#ff3000"/><stop offset="0.74" stop-color="#ff0d00"/><stop offset="1" stop-color="#f30000"/></linearGradient><linearGradient id="s233" x1="0" y1="0" x2="0" y2="1"><stop offset="0" stop-color="#ffcb00"/><stop offset="0.05" stop-color="#ffac00"/><stop offset="0.1" stop-color="#ff9500"/><stop offset="0.18" stop-color="#ff7b00"/><stop offset="0.3" stop-color="#ff5a00"/><stop offset="0.5" stop-color="#ff2f00"/><stop offset="0.74" stop-color="#ff0b00"/><stop offset="1" stop-color="#f10000"/></linearGradient><linearGradient id="s234" x1="0" y1="0" x2="0" y2="1"><stop offset="0" stop-color="#ffcb00"/><stop offset="0.05" stop-color="#ffac00"/><stop offset="0.1" stop-color="#ff9400"/><stop offset="0.18" stop-color="#ff7a00"/><stop offset="0.3" stop-color="#ff5900"/><stop offset="0.5" stop-color="#ff2e00"/><stop offset="0.74" stop-color="#ff0a00"/><stop offset="1" stop-color="#f00000"/></linearGradient><linearGradient id="s235" x1="0" y1="0" x2="0" y2="1"><stop offset="0" stop-color="#ffcb00"/><stop offset="0.05" stop-color="#ffac00"/><stop offset="0.1" stop-color="#ff9400"/><stop offset="0.18" stop-color="#ff7a00"/><stop offset="0.3" stop-color="#ff5900"/><stop offset="0.5" stop-color="#ff2d00"/><stop offset="0.74" stop-color="#ff0900"/><stop offset="1" stop-color="#ef0000"/></linearGradient><linearGradient id="s236" x1="0" y1="0" x2="0" y2="1"><stop offset="0" stop-color="#ffcb00"/><stop offset="0.05" stop-color="#ffac00"/><stop offset="0.1" stop-color="#ff9400"/><stop offset="0.18" stop-color="#ff7900"/><stop offset="0.3" stop-color="#ff5800"/><stop offset="0.5" stop-color="#ff2c00"/><stop offset="0.74" stop-color="#ff0800"/><stop offset="1" stop-color="#ed0000"/></linearGradient><linearGradient id="s237" x1="0" y1="0" x2="0" y2="1"><stop offset="0" stop-color="#ffcb00"/><stop offset="0.05" stop-color="#ffac00"/><stop offset="0.1" stop-color="#ff9300"/><stop offset="0.18" stop-color="#ff7900"/><stop offset="0.3" stop-color="#ff5700"/><stop offset="0.5" stop-color="#ff2b00"/><stop offset="0.74" stop-color="#ff0600"/><stop offset="1" stop-color="#ec0000"/></linearGradient><linearGradient id="s238" x1="0" y1="0" x2="0" y2="1"><stop offset="0" stop-color="#ffcb00"/><stop offset="0.05" stop-color="#ffab00"/><stop offset="0.1" stop-color="#ff9300"/><stop offset="0.18" stop-color="#ff7800"/><stop offset="0.3" stop-color="#ff5600"/><stop offset="0.5" stop-color="#ff2a00"/><stop offset="0.74" stop-color="#ff0500"/><stop offset="1" stop-color="#ea0000"/></linearGradient><linearGradient id="s239" x1="0" y1="0" x2="0" y2="1"><stop offset="0" stop-color="#ffcb00"/><stop offset="0.05" stop-color="#ffab00"/><stop offset="0.1" stop-color="#ff9200"/><stop offset="0.18" stop-color="#ff7700"/><stop offset="0.3" stop-color="#ff5500"/><stop offset="0.5" stop-color="#ff2800"/><stop offset="0.74" stop-color="#ff0300"/><stop offset="1" stop-color="#e80000"/></linearGradient><linearGradient id="s240" x1="0" y1="0" x2="0" y2="1"><stop offset="0" stop-color="#ffcb00"/><stop offset="0.05" stop-color="#ffab00"/><stop offset="0.1" stop-color="#ff9100"/><stop offset="0.18" stop-color="#ff7600"/><stop offset="0.3" stop-color="#ff5400"/><stop offset="0.5" stop-color="#ff2600"/><stop offset="0.74" stop-color="#ff0000"/><stop offset="1" stop-color="#e50000"/></linearGradient><linearGradient id="s241" x1="0" y1="0" x2="0" y2="1"><stop offset="0" stop-color="#ffcb00"/><stop offset="0.05" stop-color="#ffaa00"/><stop offset="0.1" stop-color="#ff9100"/><stop offset="0.18" stop-color="#ff7500"/><stop offset="0.3" stop-color="#ff5200"/><stop offset="0.5" stop-color="#ff2300"/><stop offset="0.74" stop-color="#fc0000"/><stop offset="1" stop-color="#e10000"/></linearGradient><linearGradient id="s242" x1="0" y1="0" x2="0" y2="1"><stop offset="0" stop-color="#ffcb00"/><stop offset="0.05" stop-color="#ffa900"/><stop offset="0.1" stop-color="#ff8f00"/><stop offset="0.18" stop-color="#ff7300"/><stop offset="0.3" stop-color="#ff4f00"/><stop offset="0.5" stop-color="#ff2000"/><stop offset="0.74" stop-color="#f80000"/><stop offset="1" stop-color="#dd0000"/></linearGradient><linearGradient id="s243" x1="0" y1="0" x2="0" y2="1"><stop offset="0" stop-color="#ffcb00"/><stop offset="0.05" stop-color="#ffa900"/><stop offset="0.1" stop-color="#ff8e00"/><stop offset="0.18" stop-color="#ff7100"/><stop offset="0.3" stop-color="#ff4d00"/><stop offset="0.5" stop-color="#ff1d00"/><stop offset="0.74" stop-color="#f40000"/><stop offset="1" stop-color="#d80000"/></linearGradient><linearGradient id="s244" x1="0" y1="0" x2="0" y2="1"><stop offset="0" stop-color="#ffcb00"/><stop offset="0.05" stop-color="#ffa800"/><stop offset="0.1" stop-color="#ff8d00"/><stop offset="0.18" stop-color="#ff6f00"/><stop offset="0.3" stop-color="#ff4a00"/><stop offset="0.5" stop-color="#ff1900"/><stop offset="0.74" stop-color="#ef0000"/><stop offset="1" stop-color="#d30000"/></linearGradient><linearGradient id="s245" x1="0" y1="0" x2="0" y2="1"><stop offset="0" stop-color="#ffcb00"/><stop offset="0.05" stop-color="#ffa700"/><stop offset="0.1" stop-color="#ff8c00"/><stop offset="0.18" stop-color="#ff6d00"/><stop offset="0.3" stop-color="#ff4700"/><stop offset="0.5" stop-color="#ff1500"/><stop offset="0.74" stop-color="#ea0000"/><stop offset="1" stop-color="#cd0000"/></linearGradient><linearGradient id="s246" x1="0" y1="0" x2="0" y2="1"><stop offset="0" stop-color="#ffcb00"/><stop offset="0.05" stop-color="#ffa700"/><stop offset="0.1" stop-color="#ff8a00"/><stop offset="0.18" stop-color="#ff6b00"/><stop offset="0.3" stop-color="#ff4500"/><stop offset="0.5" stop-color="#ff1100"/><stop offset="0.74" stop-color="#e60000"/><stop offset="1" stop-color="#c80000"/></linearGradient><linearGradient id="s247" x1="0" y1="0" x2="0" y2="1"><stop offset="0" stop-color="#ffcb00"/><stop offset="0.05" stop-color="#ffa600"/><stop offset="0.1" stop-color="#ff8900"/><stop offset="0.18" stop-color="#ff6900"/><stop offset="0.3" stop-color="#ff4100"/><stop offset="0.5" stop-color="#ff0c00"/><stop offset="0.74" stop-color="#e00000"/><stop offset="1" stop-color="#c10000"/></linearGradient><linearGradient id="s248" x1="0" y1="0" x2="0" y2="1"><stop offset="0" stop-color="#ffcb00"/><stop offset="0.05" stop-color="#ffa500"/><stop offset="0.1" stop-color="#ff8700"/><stop offset="0.18" stop-color="#ff6600"/><stop offset="0.3" stop-color="#ff3d00"/><stop offset="0.5" stop-color="#ff0700"/><stop offset="0.74" stop-color="#d90000"/><stop offset="1" stop-color="#b90000"/></linearGradient><linearGradient id="s249" x1="0" y1="0" x2="0" y2="1"><stop offset="0" stop-color="#ffcb00"/><stop offset="0.05" stop-color="#ffa300"/><stop offset="0.1" stop-color="#ff8500"/><stop offset="0.18" stop-color="#ff6300"/><stop offset="0.3" stop-color="#ff3900"/><stop offset="0.5" stop-color="#ff0100"/><stop offset="0.74" stop-color="#d20000"/><stop offset="1" stop-color="#b10000"/></linearGradient><linearGradient id="s250" x1="0" y1="0" x2="0" y2="1"><stop offset="0" stop-color="#ffcb00"/><stop offset="0.05" stop-color="#ffa200"/><stop offset="0.1" stop-color="#ff8300"/><stop offset="0.18" stop-color="#ff6000"/><stop offset="0.3" stop-color="#ff3500"/><stop offset="0.5" stop-color="#fb0000"/><stop offset="0.74" stop-color="#cb0000"/><stop offset="1" stop-color="#aa0000"/></linearGradient><linearGradient id="s251" x1="0" y1="0" x2="0" y2="1"><stop offset="0" stop-color="#ffc500"/><stop offset="0.05" stop-color="#ff9d00"/><stop offset="0.1" stop-color="#ff7d00"/><stop offset="0.18" stop-color="#ff5b00"/><stop offset="0.3" stop-color="#ff3000"/><stop offset="0.5" stop-color="#f60000"/><stop offset="0.74" stop-color="#c70000"/><stop offset="1" stop-color="#a50000"/></linearGradient><linearGradient id="s252" x1="0" y1="0" x2="0" y2="1"><stop offset="0" stop-color="#ffba00"/><stop offset="0.05" stop-color="#ff9300"/><stop offset="0.1" stop-color="#ff7500"/><stop offset="0.18" stop-color="#ff5300"/><stop offset="0.3" stop-color="#ff2900"/><stop offset="0.5" stop-color="#f00000"/><stop offset="0.74" stop-color="#c30000"/><stop offset="1" stop-color="#a20000"/></linearGradient><linearGradient id="s253" x1="0" y1="0" x2="0" y2="1"><stop offset="0" stop-color="#ffb200"/><stop offset="0.05" stop-color="#ff8c00"/><stop offset="0.1" stop-color="#ff6e00"/><stop offset="0.18" stop-color="#ff4d00"/><stop offset="0.3" stop-color="#ff2400"/><stop offset="0.5" stop-color="#ed0000"/><stop offset="0.74" stop-color="#c00000"/><stop offset="1" stop-color="#a00000"/></linearGradient><linearGradient id="s254" x1="0" y1="0" x2="0" y2="1"><stop offset="0" stop-color="#ffad00"/><stop offset="0.05" stop-color="#ff8700"/><stop offset="0.1" stop-color="#ff6900"/><stop offset="0.18" stop-color="#ff4900"/><stop offset="0.3" stop-color="#ff2100"/><stop offset="0.5" stop-color="#ea0000"/><stop offset="0.74" stop-color="#be0000"/><stop offset="1" stop-color="#9f0000"/></linearGradient><linearGradient id="s255" x1="0" y1="0" x2="0" y2="1"><stop offset="0" stop-color="#ffa700"/><stop offset="0.05" stop-color="#ff8200"/><stop offset="0.1" stop-color="#ff6500"/><stop offset="0.18" stop-color="#ff4500"/><stop offset="0.3" stop-color="#ff1e00"/><stop offset="0.5" stop-color="#e80000"/><stop offset="0.74" stop-color="#bc0000"/><stop offset="1" stop-color="#9e0000"/></linearGradient><linearGradient id="s256" x1="0" y1="0" x2="0" y2="1"><stop offset="0" stop-color="#ffa200"/><stop offset="0.05" stop-color="#ff7d00"/><stop offset="0.1" stop-color="#ff6100"/><stop offset="0.18" stop-color="#ff4100"/><stop offset="0.3" stop-color="#ff1a00"/><stop offset="0.5" stop-color="#e50000"/><stop offset="0.74" stop-color="#bb0000"/><stop offset="1" stop-color="#9d0000"/></linearGradient><linearGradient id="s257" x1="0" y1="0" x2="0" y2="1"><stop offset="0" stop-color="#ff9c00"/><stop offset="0.05" stop-color="#ff7800"/><stop offset="0.1" stop-color="#ff5c00"/><stop offset="0.18" stop-color="#ff3e00"/><stop offset="0.3" stop-color="#ff1700"/><stop offset="0.5" stop-color="#e30000"/><stop offset="0.74" stop-color="#b90000"/><stop offset="1" stop-color="#9c0000"/></linearGradient><linearGradient id="s258" x1="0" y1="0" x2="0" y2="1"><stop offset="0" stop-color="#ff9600"/><stop offset="0.05" stop-color="#ff7300"/><stop offset="0.1" stop-color="#ff5700"/><stop offset="0.18" stop-color="#ff3900"/><stop offset="0.3" stop-color="#ff1400"/><stop offset="0.5" stop-color="#e10000"/><stop offset="0.74" stop-color="#b80000"/><stop offset="1" stop-color="#9a0000"/></linearGradient><linearGradient id="s259" x1="0" y1="0" x2="0" y2="1"><stop offset="0" stop-color="#ff8e00"/><stop offset="0.05" stop-color="#ff6c00"/><stop offset="0.1" stop-color="#ff5100"/><stop offset="0.18" stop-color="#ff3400"/><stop offset="0.3" stop-color="#ff1000"/><stop offset="0.5" stop-color="#de0000"/><stop offset="0.74" stop-color="#b60000"/><stop offset="1" stop-color="#990000"/></linearGradient><linearGradient id="s260" x1="0" y1="0" x2="0" y2="1"><stop offset="0" stop-color="#ff8700"/><stop offset="0.05" stop-color="#ff6600"/><stop offset="0.1" stop-color="#ff4c00"/><stop offset="0.18" stop-color="#ff2f00"/><stop offset="0.3" stop-color="#ff0c00"/><stop offset="0.5" stop-color="#db0000"/><stop offset="0.74" stop-color="#b40000"/><stop offset="1" stop-color="#990000"/></linearGradient><linearGradient id="s261" x1="0" y1="0" x2="0" y2="1"><stop offset="0" stop-color="#ff8000"/><stop offset="0.05" stop-color="#ff5f00"/><stop offset="0.1" stop-color="#ff4600"/><stop offset="0.18" stop-color="#ff2a00"/><stop offset="0.3" stop-color="#ff0800"/><stop offset="0.5" stop-color="#d80000"/><stop offset="0.74" stop-color="#b20000"/><stop offset="1" stop-color="#980000"/></linearGradient><linearGradient id="s262" x1="0" y1="0" x2="0" y2="1"><stop offset="0" stop-color="#ff7800"/><stop offset="0.05" stop-color="#ff5900"/><stop offset="0.1" stop-color="#ff4000"/><stop offset="0.18" stop-color="#ff2500"/><stop offset="0.3" stop-color="#ff0400"/><stop offset="0.5" stop-color="#d60000"/><stop offset="0.74" stop-color="#b10000"/><stop offset="1" stop-color="#970000"/></linearGradient><linearGradient id="s263" x1="0" y1="0" x2="0" y2="1"><stop offset="0" stop-color="#ff7100"/><stop offset="0.05" stop-color="#ff5200"/><stop offset="0.1" stop-color="#ff3a00"/><stop offset="0.18" stop-color="#ff2000"/><stop offset="0.3" stop-color="#ff0000"/><stop offset="0.5" stop-color="#d30000"/><stop offset="0.74" stop-color="#af0000"/><stop offset="1" stop-color="#960000"/></linearGradient><linearGradient id="s264" x1="0" y1="0" x2="0" y2="1"><stop offset="0" stop-color="#ff6a00"/><stop offset="0.05" stop-color="#ff4c00"/><stop offset="0.1" stop-color="#ff3500"/><stop offset="0.18" stop-color="#ff1b00"/><stop offset="0.3" stop-color="#fb0000"/><stop offset="0.5" stop-color="#d00000"/><stop offset="0.74" stop-color="#ae0000"/><stop offset="1" stop-color="#950000"/></linearGradient><linearGradient id="s265" x1="0" y1="0" x2="0" y2="1"><stop offset="0" stop-color="#ff6200"/><stop offset="0.05" stop-color="#ff4600"/><stop offset="0.1" stop-color="#ff2f00"/><stop offset="0.18" stop-color="#ff1600"/><stop offset="0.3" stop-color="#f70000"/><stop offset="0.5" stop-color="#ce0000"/><stop offset="0.74" stop-color="#ac0000"/><stop offset="1" stop-color="#940000"/></linearGradient><linearGradient id="s266" x1="0" y1="0" x2="0" y2="1"><stop offset="0" stop-color="#ff5a00"/><stop offset="0.05" stop-color="#ff3f00"/><stop offset="0.1" stop-color="#ff2900"/><stop offset="0.18" stop-color="#ff1100"/><stop offset="0.3" stop-color="#f20000"/><stop offset="0.5" stop-color="#cb0000"/><stop offset="0.74" stop-color="#aa0000"/><stop offset="1" stop-color="#940000"/></linearGradient><linearGradient id="s267" x1="0" y1="0" x2="0" y2="1"><stop offset="0" stop-color="#ff5100"/><stop offset="0.05" stop-color="#ff3700"/><stop offset="0.1" stop-color="#ff2200"/><stop offset="0.18" stop-color="#ff0b00"/><stop offset="0.3" stop-color="#ee0000"/><stop offset="0.5" stop-color="#c80000"/><stop offset="0.74" stop-color="#a90000"/><stop offset="1" stop-color="#930000"/></linearGradient><linearGradient id="s268" x1="0" y1="0" x2="0" y2="1"><stop offset="0" stop-color="#ff4900"/><stop offset="0.05" stop-color="#ff2f00"/><stop offset="0.1" stop-color="#ff1b00"/><stop offset="0.18" stop-color="#ff0600"/><stop offset="0.3" stop-color="#e90000"/><stop offset="0.5" stop-color="#c50000"/><stop offset="0.74" stop-color="#a70000"/><stop offset="1" stop-color="#920000"/></linearGradient><linearGradient id="s269" x1="0" y1="0" x2="0" y2="1"><stop offset="0" stop-color="#ff4000"/><stop offset="0.05" stop-color="#ff2800"/><stop offset="0.1" stop-color="#ff1500"/><stop offset="0.18" stop-color="#ff0000"/><stop offset="0.3" stop-color="#e50000"/><stop offset="0.5" stop-color="#c20000"/><stop offset="0.74" stop-color="#a60000"/><stop offset="1" stop-color="#910000"/></linearGradient><linearGradient id="s270" x1="0" y1="0" x2="0" y2="1"><stop offset="0" stop-color="#ff3700"/><stop offset="0.05" stop-color="#ff2000"/><stop offset="0.1" stop-color="#ff0e00"/><stop offset="0.18" stop-color="#f90000"/><stop offset="0.3" stop-color="#e00000"/><stop offset="0.5" stop-color="#bf0000"/><stop offset="0.74" stop-color="#a40000"/><stop offset="1" stop-color="#910000"/></linearGradient><linearGradient id="s271" x1="0" y1="0" x2="0" y2="1"><stop offset="0" stop-color="#ff2f00"/><stop offset="0.05" stop-color="#ff1900"/><stop offset="0.1" stop-color="#ff0700"/><stop offset="0.18" stop-color="#f30000"/><stop offset="0.3" stop-color="#dc0000"/><stop offset="0.5" stop-color="#bc0000"/><stop offset="0.74" stop-color="#a20000"/><stop offset="1" stop-color="#900000"/></linearGradient><linearGradient id="s272" x1="0" y1="0" x2="0" y2="1"><stop offset="0" stop-color="#ff2600"/><stop offset="0.05" stop-color="#ff1100"/><stop offset="0.1" stop-color="#ff0000"/><stop offset="0.18" stop-color="#ee0000"/><stop offset="0.3" stop-color="#d70000"/><stop offset="0.5" stop-color="#b90000"/><stop offset="0.74" stop-color="#a10000"/><stop offset="1" stop-color="#900000"/></linearGradient><linearGradient id="s273" x1="0" y1="0" x2="0" y2="1"><stop offset="0" stop-color="#ff1d00"/><stop offset="0.05" stop-color="#ff0900"/><stop offset="0.1" stop-color="#f90000"/><stop offset="0.18" stop-color="#e80000"/><stop offset="0.3" stop-color="#d30000"/><stop offset="0.5" stop-color="#b60000"/><stop offset="0.74" stop-color="#9f0000"/><stop offset="1" stop-color="#8f0000"/></linearGradient><linearGradient id="s274" x1="0" y1="0" x2="0" y2="1"><stop offset="0" stop-color="#ff1400"/><stop offset="0.05" stop-color="#ff0200"/><stop offset="0.1" stop-color="#f20000"/><stop offset="0.18" stop-color="#e20000"/><stop offset="0.3" stop-color="#ce0000"/><stop offset="0.5" stop-color="#b40000"/><stop offset="0.74" stop-color="#9e0000"/><stop offset="1" stop-color="#8e0000"/></linearGradient><linearGradient id="s275" x1="0" y1="0" x2="0" y2="1"><stop offset="0" stop-color="#ff0b00"/><stop offset="0.05" stop-color="#f90000"/><stop offset="0.1" stop-color="#eb0000"/><stop offset="0.18" stop-color="#dc0000"/><stop offset="0.3" stop-color="#c90000"/><stop offset="0.5" stop-color="#b00000"/><stop offset="0.74" stop-color="#9c0000"/><stop offset="1" stop-color="#8e0000"/></linearGradient><linearGradient id="s276" x1="0" y1="0" x2="0" y2="1"><stop offset="0" stop-color="#ff0100"/><stop offset="0.05" stop-color="#f00000"/><stop offset="0.1" stop-color="#e30000"/><stop offset="0.18" stop-color="#d60000"/><stop offset="0.3" stop-color="#c40000"/><stop offset="0.5" stop-color="#ad0000"/><stop offset="0.74" stop-color="#9a0000"/><stop offset="1" stop-color="#8d0000"/></linearGradient><linearGradient id="s277" x1="0" y1="0" x2="0" y2="1"><stop offset="0" stop-color="#f60000"/><stop offset="0.05" stop-color="#e80000"/><stop offset="0.1" stop-color="#dc0000"/><stop offset="0.18" stop-color="#cf0000"/><stop offset="0.3" stop-color="#bf0000"/><stop offset="0.5" stop-color="#aa0000"/><stop offset="0.74" stop-color="#990000"/><stop offset="1" stop-color="#8c0000"/></linearGradient><linearGradient id="s278" x1="0" y1="0" x2="0" y2="1"><stop offset="0" stop-color="#ed0000"/><stop offset="0.05" stop-color="#df0000"/><stop offset="0.1" stop-color="#d40000"/><stop offset="0.18" stop-color="#c90000"/><stop offset="0.3" stop-color="#ba0000"/><stop offset="0.5" stop-color="#a70000"/><stop offset="0.74" stop-color="#970000"/><stop offset="1" stop-color="#8c0000"/></linearGradient><linearGradient id="s279" x1="0" y1="0" x2="0" y2="1"><stop offset="0" stop-color="#e30000"/><stop offset="0.05" stop-color="#d60000"/><stop offset="0.1" stop-color="#cd0000"/><stop offset="0.18" stop-color="#c20000"/><stop offset="0.3" stop-color="#b50000"/><stop offset="0.5" stop-color="#a40000"/><stop offset="0.74" stop-color="#950000"/><stop offset="1" stop-color="#8b0000"/></linearGradient><linearGradient id="s280" x1="0" y1="0" x2="0" y2="1"><stop offset="0" stop-color="#d90000"/><stop offset="0.05" stop-color="#ce0000"/><stop offset="0.1" stop-color="#c50000"/><stop offset="0.18" stop-color="#bc0000"/><stop offset="0.3" stop-color="#b00000"/><stop offset="0.5" stop-color="#a00000"/><stop offset="0.74" stop-color="#930000"/><stop offset="1" stop-color="#8a0000"/></linearGradient><linearGradient id="s281" x1="0" y1="0" x2="0" y2="1"><stop offset="0" stop-color="#ce0000"/><stop offset="0.05" stop-color="#c50000"/><stop offset="0.1" stop-color="#bd0000"/><stop offset="0.18" stop-color="#b50000"/><stop offset="0.3" stop-color="#ab0000"/><stop offset="0.5" stop-color="#9d0000"/><stop offset="0.74" stop-color="#920000"/><stop offset="1" stop-color="#8a0000"/></linearGradient><linearGradient id="s282" x1="0" y1="0" x2="0" y2="1"><stop offset="0" stop-color="#c30000"/><stop offset="0.05" stop-color="#bb0000"/><stop offset="0.1" stop-color="#b50000"/><stop offset="0.18" stop-color="#ae0000"/><stop offset="0.3" stop-color="#a50000"/><stop offset="0.5" stop-color="#990000"/><stop offset="0.74" stop-color="#900000"/><stop offset="1" stop-color="#890000"/></linearGradient><linearGradient id="s283" x1="0" y1="0" x2="0" y2="1"><stop offset="0" stop-color="#b80000"/><stop offset="0.05" stop-color="#b20000"/><stop offset="0.1" stop-color="#ac0000"/><stop offset="0.18" stop-color="#a70000"/><stop offset="0.3" stop-color="#9f0000"/><stop offset="0.5" stop-color="#960000"/><stop offset="0.74" stop-color="#8e0000"/><stop offset="1" stop-color="#880000"/></linearGradient><linearGradient id="s284" x1="0" y1="0" x2="0" y2="1"><stop offset="0" stop-color="#ad0000"/><stop offset="0.05" stop-color="#a80000"/><stop offset="0.1" stop-color="#a40000"/><stop offset="0.18" stop-color="#9f0000"/><stop offset="0.3" stop-color="#9a0000"/><stop offset="0.5" stop-color="#920000"/><stop offset="0.74" stop-color="#8c0000"/><stop offset="1" stop-color="#870000"/></linearGradient><linearGradient id="s285" x1="0" y1="0" x2="0" y2="1"><stop offset="0" stop-color="#9e0000"/><stop offset="0.05" stop-color="#9a0000"/><stop offset="0.1" stop-color="#980000"/><stop offset="0.18" stop-color="#950000"/><stop offset="0.3" stop-color="#920000"/><stop offset="0.5" stop-color="#8d0000"/><stop offset="0.74" stop-color="#890000"/><stop offset="1" stop-color="#870000"/></linearGradient><linearGradient id="s286" x1="0" y1="0" x2="0" y2="1"><stop offset="0" stop-color="#890000"/><stop offset="0.05" stop-color="#890000"/><stop offset="0.1" stop-color="#890000"/><stop offset="0.18" stop-color="#880000"/><stop offset="0.3" stop-color="#880000"/><stop offset="0.5" stop-color="#870000"/><stop offset="0.74" stop-color="#860000"/><stop offset="1" stop-color="#860000"/></linearGradient></defs>
<g><rect x="198" y="362.70" width="1" height="1.57" fill="url(#s0)"/><rect x="199" y="360.09" width="1" height="4.72" fill="url(#s1)"/><rect x="200" y="357.83" width="1" height="7.52" fill="url(#s2)"/><rect x="201" y="356.98" width="1" height="8.91" fill="url(#s3)"/><rect x="202" y="356.13" width="1" height="10.30" fill="url(#s4)"/><rect x="203" y="355.49" width="1" height="11.44" fill="url(#s5)"/><rect x="204" y="355.06" width="1" height="12.33" fill="url(#s6)"/><rect x="205" y="354.64" width="1" height="13.21" fill="url(#s7)"/><rect x="206" y="354.21" width="1" height="14.10" fill="url(#s8)"/><rect x="207" y="353.77" width="1" height="14.99" fill="url(#s9)"/><rect x="208" y="353.32" width="1" height="15.90" fill="url(#s10)"/><rect x="209" y="352.88" width="1" height="16.81" fill="url(#s11)"/><rect x="210" y="352.43" width="1" height="17.72" fill="url(#s12)"/><rect x="211" y="352.01" width="1" height="18.60" fill="url(#s13)"/><rect x="212" y="351.64" width="1" height="19.36" fill="url(#s14)"/><rect x="213" y="351.26" width="1" height="20.11" fill="url(#s15)"/><rect x="214" y="350.89" width="1" height="20.86" fill="url(#s16)"/><rect x="215" y="350.56" width="1" height="21.56" fill="url(#s17)"/><rect x="216" y="350.29" width="1" height="22.21" fill="url(#s18)"/><rect x="217" y="350.01" width="1" height="22.86" fill="url(#s19)"/><rect x="218" y="349.74" width="1" height="23.51" fill="url(#s20)"/><rect x="219" y="349.54" width="1" height="24.08" fill="url(#s21)"/><rect x="220" y="349.42" width="1" height="24.54" fill="url(#s22)"/><rect x="221" y="349.30" width="1" height="24.98" fill="url(#s23)"/><rect x="222" y="349.18" width="1" height="25.42" fill="url(#s24)"/><rect x="223" y="349.06" width="1" height="25.86" fill="url(#s25)"/><rect x="224" y="349.00" width="1" height="26.24" fill="url(#s26)"/><rect x="225" y="349.00" width="1" height="26.54" fill="url(#s27)"/><rect x="226" y="349.00" width="1" height="26.81" fill="url(#s28)"/><rect x="227" y="349.00" width="1" height="27.09" fill="url(#s29)"/><rect x="228" y="349.00" width="2" height="27.50" fill="url(#s30)"/><rect x="230" y="349.00" width="2" height="27.50" fill="url(#s31)"/><rect x="232" y="349.00" width="2" height="27.50" fill="url(#s32)"/><rect x="234" y="349.00" width="2" height="27.50" fill="url(#s33)"/><rect x="236" y="349.00" width="2" height="27.50" fill="url(#s34)"/><rect x="238" y="349.00" width="2" height="27.50" fill="url(#s35)"/><rect x="240" y="349.00" width="2" height="27.50" fill="url(#s36)"/><rect x="242" y="349.00" width="2" height="27.50" fill="url(#s37)"/><rect x="244" y="349.00" width="2" height="27.50" fill="url(#s38)"/><rect x="246" y="349.00" width="2" height="27.50" fill="url(#s39)"/><rect x="248" y="349.00" width="2" height="27.50" fill="url(#s40)"/><rect x="250" y="349.00" width="2" height="27.50" fill="url(#s41)"/><rect x="252" y="349.00" width="2" height="27.50" fill="url(#s42)"/><rect x="254" y="349.00" width="2" height="27.50" fill="url(#s43)"/><rect x="256" y="349.00" width="2" height="27.50" fill="url(#s44)"/><rect x="258" y="349.00" width="2" height="27.50" fill="url(#s45)"/><rect x="260" y="349.00" width="2" height="27.50" fill="url(#s46)"/><rect x="262" y="349.00" width="2" height="27.50" fill="url(#s47)"/><rect x="264" y="349.00" width="2" height="27.50" fill="url(#s48)"/><rect x="266" y="349.00" width="2" height="27.50" fill="url(#s49)"/><rect x="268" y="349.00" width="2" height="27.50" fill="url(#s50)"/><rect x="270" y="349.00" width="2" height="27.50" fill="url(#s51)"/><rect x="272" y="349.00" width="2" height="27.50" fill="url(#s52)"/><rect x="274" y="349.00" width="2" height="27.50" fill="url(#s53)"/><rect x="276" y="349.00" width="2" height="27.50" fill="url(#s54)"/><rect x="278" y="349.00" width="2" height="27.50" fill="url(#s55)"/><rect x="280" y="349.00" width="2" height="27.50" fill="url(#s56)"/><rect x="282" y="349.00" width="2" height="27.50" fill="url(#s57)"/><rect x="284" y="349.00" width="2" height="27.50" fill="url(#s58)"/><rect x="286" y="349.00" width="2" height="27.50" fill="url(#s59)"/><rect x="288" y="349.00" width="2" height="27.50" fill="url(#s60)"/><rect x="290" y="349.00" width="2" height="27.50" fill="url(#s61)"/><rect x="292" y="349.00" width="2" height="27.50" fill="url(#s62)"/><rect x="294" y="349.00" width="2" height="27.50" fill="url(#s63)"/><rect x="296" y="349.00" width="2" height="27.50" fill="url(#s64)"/><rect x="298" y="349.00" width="2" height="27.50" fill="url(#s65)"/><rect x="300" y="349.00" width="2" height="27.50" fill="url(#s66)"/><rect x="302" y="349.00" width="2" height="27.50" fill="url(#s67)"/><rect x="304" y="349.00" width="2" height="27.50" fill="url(#s68)"/><rect x="306" y="349.00" width="2" height="27.50" fill="url(#s69)"/><rect x="308" y="349.00" width="2" height="27.50" fill="url(#s70)"/><rect x="310" y="349.00" width="2" height="27.50" fill="url(#s71)"/><rect x="312" y="349.00" width="2" height="27.50" fill="url(#s72)"/><rect x="314" y="349.00" width="2" height="27.50" fill="url(#s73)"/><rect x="316" y="349.00" width="2" height="27.50" fill="url(#s74)"/><rect x="318" y="349.00" width="2" height="27.50" fill="url(#s75)"/><rect x="320" y="349.00" width="2" height="27.50" fill="url(#s76)"/><rect x="322" y="349.00" width="2" height="27.50" fill="url(#s77)"/><rect x="324" y="349.00" width="2" height="27.50" fill="url(#s78)"/><rect x="326" y="349.00" width="2" height="27.50" fill="url(#s79)"/><rect x="328" y="349.00" width="2" height="27.50" fill="url(#s80)"/><rect x="330" y="349.00" width="3" height="27.50" fill="url(#s81)"/><rect x="333" y="349.00" width="3" height="27.50" fill="url(#s82)"/><rect x="336" y="349.00" width="3" height="27.50" fill="url(#s83)"/><rect x="339" y="349.00" width="3" height="27.50" fill="url(#s84)"/><rect x="342" y="349.00" width="3" height="27.50" fill="url(#s85)"/><rect x="345" y="349.00" width="3" height="27.50" fill="url(#s86)"/><rect x="348" y="349.00" width="3" height="27.50" fill="url(#s87)"/><rect x="351" y="349.00" width="3" height="27.50" fill="url(#s88)"/><rect x="354" y="349.00" width="3" height="27.50" fill="url(#s89)"/><rect x="357" y="349.00" width="3" height="27.50" fill="url(#s90)"/><rect x="360" y="349.00" width="3" height="27.50" fill="url(#s91)"/><rect x="363" y="349.00" width="3" height="27.50" fill="url(#s92)"/><rect x="366" y="349.00" width="3" height="27.50" fill="url(#s93)"/><rect x="369" y="349.00" width="3" height="27.50" fill="url(#s94)"/><rect x="372" y="349.00" width="3" height="27.50" fill="url(#s95)"/><rect x="375" y="349.00" width="3" height="27.50" fill="url(#s96)"/><rect x="378" y="349.00" width="3" height="27.50" fill="url(#s97)"/><rect x="381" y="349.00" width="3" height="27.50" fill="url(#s98)"/><rect x="384" y="349.00" width="3" height="27.50" fill="url(#s99)"/><rect x="387" y="349.00" width="3" height="27.50" fill="url(#s100)"/><rect x="390" y="349.00" width="3" height="27.50" fill="url(#s101)"/><rect x="393" y="349.00" width="3" height="27.50" fill="url(#s102)"/><rect x="396" y="349.00" width="3" height="27.50" fill="url(#s103)"/><rect x="399" y="349.00" width="3" height="27.50" fill="url(#s104)"/><rect x="402" y="349.00" width="3" height="27.50" fill="url(#s105)"/><rect x="405" y="349.00" width="3" height="27.50" fill="url(#s106)"/><rect x="408" y="349.00" width="3" height="27.50" fill="url(#s107)"/><rect x="411" y="349.00" width="3" height="27.50" fill="url(#s108)"/><rect x="414" y="349.00" width="3" height="27.50" fill="url(#s109)"/><rect x="417" y="349.00" width="3" height="27.50" fill="url(#s110)"/><rect x="420" y="349.00" width="3" height="27.50" fill="url(#s111)"/><rect x="423" y="349.00" width="3" height="27.50" fill="url(#s112)"/><rect x="426" y="349.00" width="3" height="27.50" fill="url(#s113)"/><rect x="429" y="349.00" width="3" height="27.50" fill="url(#s114)"/><rect x="432" y="349.00" width="3" height="27.50" fill="url(#s115)"/><rect x="435" y="349.00" width="3" height="27.50" fill="url(#s116)"/><rect x="438" y="349.00" width="3" height="27.50" fill="url(#s117)"/><rect x="441" y="349.00" width="3" height="27.50" fill="url(#s118)"/><rect x="444" y="349.00" width="3" height="27.50" fill="url(#s119)"/><rect x="447" y="349.00" width="3" height="27.50" fill="url(#s120)"/><rect x="450" y="349.00" width="3" height="27.50" fill="url(#s121)"/><rect x="453" y="349.00" width="3" height="27.50" fill="url(#s122)"/><rect x="456" y="349.00" width="3" height="27.50" fill="url(#s123)"/><rect x="459" y="349.00" width="3" height="27.50" fill="url(#s124)"/><rect x="462" y="349.00" width="3" height="27.50" fill="url(#s125)"/><rect x="465" y="349.00" width="3" height="27.50" fill="url(#s126)"/><rect x="468" y="349.00" width="3" height="27.50" fill="url(#s127)"/><rect x="471" y="349.00" width="3" height="27.50" fill="url(#s128)"/><rect x="474" y="349.00" width="3" height="27.50" fill="url(#s129)"/><rect x="477" y="349.00" width="3" height="27.50" fill="url(#s130)"/><rect x="480" y="349.00" width="4" height="27.50" fill="url(#s131)"/><rect x="484" y="349.00" width="4" height="27.50" fill="url(#s132)"/><rect x="488" y="349.00" width="4" height="27.50" fill="url(#s133)"/><rect x="492" y="349.00" width="4" height="27.50" fill="url(#s134)"/><rect x="496" y="349.00" width="4" height="27.50" fill="url(#s135)"/><rect x="500" y="349.00" width="4" height="27.50" fill="url(#s136)"/><rect x="504" y="349.00" width="4" height="27.50" fill="url(#s137)"/><rect x="508" y="349.00" width="4" height="27.50" fill="url(#s138)"/><rect x="512" y="349.00" width="4" height="27.50" fill="url(#s139)"/><rect x="516" y="349.00" width="4" height="27.50" fill="url(#s140)"/><rect x="520" y="349.00" width="4" height="27.50" fill="url(#s141)"/><rect x="524" y="349.00" width="4" height="27.50" fill="url(#s142)"/><rect x="528" y="349.00" width="4" height="27.50" fill="url(#s143)"/><rect x="532" y="349.00" width="4" height="27.50" fill="url(#s144)"/><rect x="536" y="349.00" width="4" height="27.50" fill="url(#s145)"/><rect x="540" y="349.00" width="4" height="27.50" fill="url(#s146)"/><rect x="544" y="349.00" width="4" height="27.50" fill="url(#s147)"/><rect x="548" y="349.00" width="4" height="27.50" fill="url(#s148)"/><rect x="552" y="349.00" width="4" height="27.50" fill="url(#s149)"/><rect x="556" y="349.00" width="4" height="27.50" fill="url(#s150)"/><rect x="560" y="349.00" width="4" height="27.50" fill="url(#s151)"/><rect x="564" y="349.00" width="4" height="27.50" fill="url(#s152)"/><rect x="568" y="349.00" width="4" height="27.50" fill="url(#s153)"/><rect x="572" y="349.00" width="4" height="27.50" fill="url(#s154)"/><rect x="576" y="349.00" width="4" height="27.50" fill="url(#s155)"/><rect x="580" y="349.00" width="4" height="27.50" fill="url(#s156)"/><rect x="584" y="349.00" width="4" height="27.50" fill="url(#s157)"/><rect x="588" y="349.00" width="4" height="27.50" fill="url(#s158)"/><rect x="592" y="349.00" width="4" height="27.50" fill="url(#s159)"/><rect x="596" y="349.00" width="4" height="27.50" fill="url(#s160)"/><rect x="600" y="349.00" width="4" height="27.50" fill="url(#s161)"/><rect x="604" y="349.00" width="4" height="27.50" fill="url(#s162)"/><rect x="608" y="349.00" width="4" height="27.50" fill="url(#s163)"/><rect x="612" y="349.00" width="4" height="27.50" fill="url(#s164)"/><rect x="616" y="349.00" width="4" height="27.50" fill="url(#s165)"/><rect x="620" y="349.00" width="4" height="27.50" fill="url(#s166)"/><rect x="624" y="349.00" width="4" height="27.50" fill="url(#s167)"/><rect x="628" y="349.00" width="4" height="27.50" fill="url(#s168)"/><rect x="632" y="349.00" width="4" height="27.50" fill="url(#s169)"/><rect x="636" y="349.00" width="4" height="27.50" fill="url(#s170)"/><rect x="640" y="349.00" width="4" height="27.50" fill="url(#s171)"/><rect x="644" y="349.00" width="4" height="27.50" fill="url(#s172)"/><rect x="648" y="349.00" width="4" height="27.50" fill="url(#s173)"/><rect x="652" y="349.00" width="4" height="27.50" fill="url(#s174)"/><rect x="656" y="349.00" width="4" height="27.50" fill="url(#s175)"/><rect x="660" y="349.00" width="4" height="27.50" fill="url(#s176)"/><rect x="664" y="349.00" width="4" height="27.50" fill="url(#s177)"/><rect x="668" y="349.00" width="4" height="27.50" fill="url(#s178)"/><rect x="672" y="349.00" width="4" height="27.50" fill="url(#s179)"/><rect x="676" y="349.00" width="4" height="27.50" fill="url(#s180)"/><rect x="680" y="349.00" width="4" height="27.50" fill="url(#s181)"/><rect x="684" y="349.00" width="4" height="27.50" fill="url(#s182)"/><rect x="688" y="349.00" width="4" height="27.50" fill="url(#s183)"/><rect x="692" y="349.00" width="4" height="27.50" fill="url(#s184)"/><rect x="696" y="349.00" width="4" height="27.50" fill="url(#s185)"/><rect x="700" y="349.00" width="4" height="27.50" fill="url(#s186)"/><rect x="704" y="349.00" width="4" height="27.50" fill="url(#s187)"/><rect x="708" y="349.00" width="4" height="27.50" fill="url(#s188)"/><rect x="712" y="349.00" width="4" height="27.50" fill="url(#s189)"/><rect x="716" y="349.00" width="4" height="27.50" fill="url(#s190)"/><rect x="720" y="349.00" width="4" height="27.50" fill="url(#s191)"/><rect x="724" y="349.00" width="4" height="27.50" fill="url(#s192)"/><rect x="728" y="349.00" width="4" height="27.50" fill="url(#s193)"/><rect x="732" y="349.00" width="4" height="27.50" fill="url(#s194)"/><rect x="736" y="349.00" width="4" height="27.50" fill="url(#s195)"/><rect x="740" y="349.00" width="4" height="27.50" fill="url(#s196)"/><rect x="744" y="349.00" width="4" height="27.50" fill="url(#s197)"/><rect x="748" y="349.00" width="4" height="27.50" fill="url(#s198)"/><rect x="752" y="349.00" width="4" height="27.50" fill="url(#s199)"/><rect x="756" y="349.00" width="4" height="27.50" fill="url(#s200)"/><rect x="760" y="349.00" width="4" height="27.50" fill="url(#s201)"/><rect x="764" y="349.00" width="4" height="27.50" fill="url(#s202)"/><rect x="768" y="349.00" width="4" height="27.50" fill="url(#s203)"/><rect x="772" y="349.00" width="4" height="27.50" fill="url(#s204)"/><rect x="776" y="349.00" width="4" height="27.50" fill="url(#s205)"/><rect x="780" y="349.00" width="4" height="27.50" fill="url(#s206)"/><rect x="784" y="349.00" width="3" height="27.50" fill="url(#s207)"/><rect x="787" y="349.00" width="3" height="27.50" fill="url(#s208)"/><rect x="790" y="349.00" width="3" height="27.50" fill="url(#s209)"/><rect x="793" y="349.00" width="3" height="27.50" fill="url(#s210)"/><rect x="796" y="349.00" width="3" height="27.50" fill="url(#s211)"/><rect x="799" y="349.00" width="3" height="27.50" fill="url(#s212)"/><rect x="802" y="349.00" width="3" height="27.50" fill="url(#s213)"/><rect x="805" y="349.00" width="3" height="27.50" fill="url(#s214)"/><rect x="808" y="349.00" width="3" height="27.50" fill="url(#s215)"/><rect x="811" y="349.00" width="3" height="27.50" fill="url(#s216)"/><rect x="814" y="349.00" width="3" height="27.50" fill="url(#s217)"/><rect x="817" y="349.00" width="3" height="27.50" fill="url(#s218)"/><rect x="820" y="349.00" width="3" height="27.50" fill="url(#s219)"/><rect x="823" y="349.00" width="3" height="27.50" fill="url(#s220)"/><rect x="826" y="349.00" width="3" height="27.50" fill="url(#s221)"/><rect x="829" y="349.00" width="3" height="27.50" fill="url(#s222)"/><rect x="832" y="349.00" width="3" height="27.50" fill="url(#s223)"/><rect x="835" y="349.00" width="3" height="27.50" fill="url(#s224)"/><rect x="838" y="349.00" width="3" height="27.50" fill="url(#s225)"/><rect x="841" y="349.00" width="3" height="27.50" fill="url(#s226)"/><rect x="844" y="349.00" width="3" height="27.50" fill="url(#s227)"/><rect x="847" y="349.00" width="3" height="27.50" fill="url(#s228)"/><rect x="850" y="349.00" width="3" height="27.50" fill="url(#s229)"/><rect x="853" y="349.00" width="3" height="27.50" fill="url(#s230)"/><rect x="856" y="349.00" width="3" height="27.50" fill="url(#s231)"/><rect x="859" y="349.00" width="3" height="27.50" fill="url(#s232)"/><rect x="862" y="349.00" width="2" height="27.50" fill="url(#s233)"/><rect x="864" y="349.00" width="2" height="27.50" fill="url(#s234)"/><rect x="866" y="349.00" width="2" height="27.50" fill="url(#s235)"/><rect x="868" y="349.00" width="2" height="27.50" fill="url(#s236)"/><rect x="870" y="349.00" width="2" height="27.50" fill="url(#s237)"/><rect x="872" y="349.00" width="2" height="27.50" fill="url(#s238)"/><rect x="874" y="349.00" width="2" height="27.50" fill="url(#s239)"/><rect x="876" y="349.00" width="2" height="27.50" fill="url(#s240)"/><rect x="878" y="349.00" width="2" height="27.50" fill="url(#s241)"/><rect x="880" y="349.00" width="2" height="27.50" fill="url(#s242)"/><rect x="882" y="349.00" width="2" height="27.50" fill="url(#s243)"/><rect x="884" y="349.00" width="2" height="27.50" fill="url(#s244)"/><rect x="886" y="349.00" width="2" height="27.50" fill="url(#s245)"/><rect x="888" y="349.00" width="2" height="27.50" fill="url(#s246)"/><rect x="890" y="349.00" width="2" height="27.50" fill="url(#s247)"/><rect x="892" y="349.00" width="2" height="27.50" fill="url(#s248)"/><rect x="894" y="349.00" width="2" height="27.50" fill="url(#s249)"/><rect x="896" y="349.00" width="2" height="27.50" fill="url(#s250)"/><rect x="898" y="349.00" width="2" height="27.50" fill="url(#s251)"/><rect x="900" y="349.14" width="2" height="27.36" fill="url(#s252)"/><rect x="902" y="349.36" width="1" height="26.73" fill="url(#s253)"/><rect x="903" y="349.50" width="1" height="26.31" fill="url(#s254)"/><rect x="904" y="349.64" width="1" height="25.89" fill="url(#s255)"/><rect x="905" y="349.79" width="1" height="25.48" fill="url(#s256)"/><rect x="906" y="349.93" width="1" height="25.06" fill="url(#s257)"/><rect x="907" y="350.16" width="1" height="24.56" fill="url(#s258)"/><rect x="908" y="350.47" width="1" height="23.98" fill="url(#s259)"/><rect x="909" y="350.78" width="1" height="23.39" fill="url(#s260)"/><rect x="910" y="351.09" width="1" height="22.81" fill="url(#s261)"/><rect x="911" y="351.41" width="1" height="22.22" fill="url(#s262)"/><rect x="912" y="351.72" width="1" height="21.73" fill="url(#s263)"/><rect x="913" y="352.03" width="1" height="21.25" fill="url(#s264)"/><rect x="914" y="352.34" width="1" height="20.77" fill="url(#s265)"/><rect x="915" y="352.69" width="1" height="20.26" fill="url(#s266)"/><rect x="916" y="353.08" width="1" height="19.70" fill="url(#s267)"/><rect x="917" y="353.47" width="1" height="19.14" fill="url(#s268)"/><rect x="918" y="353.86" width="1" height="18.59" fill="url(#s269)"/><rect x="919" y="354.25" width="1" height="18.03" fill="url(#s270)"/><rect x="920" y="354.64" width="1" height="17.46" fill="url(#s271)"/><rect x="921" y="355.03" width="1" height="16.86" fill="url(#s272)"/><rect x="922" y="355.42" width="1" height="16.26" fill="url(#s273)"/><rect x="923" y="355.81" width="1" height="15.67" fill="url(#s274)"/><rect x="924" y="356.29" width="1" height="14.97" fill="url(#s275)"/><rect x="925" y="356.88" width="1" height="14.18" fill="url(#s276)"/><rect x="926" y="357.46" width="1" height="13.39" fill="url(#s277)"/><rect x="927" y="358.04" width="1" height="12.60" fill="url(#s278)"/><rect x="928" y="358.62" width="1" height="11.81" fill="url(#s279)"/><rect x="929" y="359.21" width="1" height="11.02" fill="url(#s280)"/><rect x="930" y="359.94" width="1" height="10.08" fill="url(#s281)"/><rect x="931" y="360.81" width="1" height="9.10" fill="url(#s282)"/><rect x="932" y="361.69" width="1" height="8.13" fill="url(#s283)"/><rect x="933" y="362.56" width="1" height="7.15" fill="url(#s284)"/><rect x="934" y="364.91" width="1" height="4.71" fill="url(#s285)"/><rect x="935" y="368.74" width="1" height="0.78" fill="url(#s286)"/></g>
<path d="M499.0 375.8L497.5 370.8L494.5 365.4L491.0 361.8L488.5 360.1L482.5 357.3L475.5 355.3L469.0 354.0L458.0 352.7L446.5 351.8L440.0 351.5L400.5 350.4L310.0 350.1L230.0 349.5L228.0 349.0M537.0 375.4L538.5 370.6L541.5 365.3L543.5 363.1L545.5 361.3L550.0 358.8L555.5 356.6L564.0 354.5L575.0 353.0L587.5 351.7L606.5 351.1L640.0 350.5L779.5 349.9L876.5 349.7L898.0 349.6L901.0 349.2M463.0 376.1L459.0 371.2L455.5 368.6L450.5 365.5L443.0 362.5L438.5 361.1L426.0 358.4L418.5 357.1L405.5 355.5L400.0 354.9L392.5 354.4L363.5 353.3L339.0 352.8L310.0 352.5L230.0 350.6L224.0 349.1M573.0 375.8L576.5 371.2L582.0 366.8L584.0 365.4L585.5 364.6L592.5 361.7L597.5 360.4L604.0 359.2L616.0 357.7L626.0 356.7L636.0 356.1L646.5 355.6L688.5 355.0L732.0 353.5L769.5 352.5L798.5 352.0L875.5 351.5L898.0 350.8L900.0 350.4L907.0 350.1M430.0 376.0L424.0 371.0L418.5 368.2L412.5 365.5L404.5 363.1L398.0 361.4L384.5 359.5L364.0 357.2L340.0 355.7L295.0 353.9L230.0 351.7L222.0 349.4M604.0 376.2L612.5 371.0L621.0 368.2L631.5 365.5L638.5 364.5L645.5 363.8L655.5 363.2L687.5 362.2L734.5 358.6L773.0 356.3L798.0 355.5L874.0 354.2L898.0 352.6L901.0 351.9L907.0 351.3L912.0 351.6M402.0 376.1L394.5 371.0L390.0 369.0L384.0 366.8L380.0 365.5L374.5 364.3L365.5 362.5L359.0 361.4L347.5 360.0L334.5 358.8L307.0 356.7L266.0 354.4L230.0 352.8L224.0 351.1L219.5 349.6M680.5 376.5L686.5 375.7L691.5 374.8L698.0 373.3L706.5 371.0L734.5 365.5L770.0 361.4L783.0 360.5L796.0 359.9L849.0 358.7L873.5 357.7L881.5 356.9L898.0 354.8L900.0 354.3L908.0 352.9L912.5 352.8L916.0 353.0M377.5 376.2L369.0 371.0L365.0 369.3L358.5 367.3L352.0 365.5L340.0 363.3L333.5 362.3L325.0 361.3L289.0 357.8L254.0 355.2L230.0 353.7L224.0 352.2L218.0 349.9M741.5 376.4L759.0 371.0L772.5 368.5L784.5 366.7L798.5 365.4L848.5 363.4L873.0 361.8L879.5 360.9L890.0 359.1L898.0 357.6L908.0 355.1L914.5 354.4L920.0 354.6M357.0 376.5L347.5 371.2L343.5 369.4L336.5 367.5L328.0 365.5L307.5 362.3L293.0 360.6L255.0 356.7L230.0 354.7L221.5 352.4L219.0 351.5L216.5 350.3M788.0 376.5L797.0 375.0L808.0 373.6L838.0 371.0L855.0 369.7L873.0 367.6L877.0 366.7L890.0 362.9L894.5 361.3L901.0 359.9L909.0 357.7L915.0 356.6L919.5 356.1L924.0 356.1M338.0 376.2L330.0 372.0L324.5 369.4L312.0 366.5L303.5 364.9L286.5 362.3L239.5 356.7L230.0 355.8L219.0 352.5L215.5 350.9M873.5 376.4L877.5 374.7L883.5 371.0L889.5 368.3L894.5 365.6L896.0 365.0L901.0 363.6L907.5 361.3L911.5 360.3L924.0 357.9L927.5 358.2M322.0 376.4L313.0 371.9L307.5 369.4L306.5 369.1L291.0 365.8L283.5 364.5L254.0 360.1L230.0 357.0L218.0 353.1L214.0 351.3M889.0 376.5L894.5 371.4L895.5 370.7L897.5 369.7L901.0 368.6L909.5 364.9L919.0 362.3L924.5 361.0L929.0 360.2L930.0 360.2L931.0 360.4M307.0 376.4L299.0 372.5L291.5 369.2L274.0 365.5L256.5 362.3L230.0 358.3L216.0 353.3L212.5 351.8M899.5 376.3L901.0 375.8L910.0 370.8L914.0 369.0L920.0 367.2L929.0 364.0L932.5 363.3L934.0 363.2M293.5 376.5L278.0 369.4L254.0 363.8L230.0 359.7L225.5 358.0L221.5 356.3L214.0 353.6L211.0 352.3M280.5 376.3L266.0 369.3L252.5 365.5L237.0 362.2L229.5 360.9L215.0 354.9L212.5 354.2L209.5 352.9M270.0 376.5L262.0 372.2L257.0 369.3L243.5 365.5L229.0 362.1L216.0 356.5L210.5 354.6L208.5 353.7M260.5 376.2L254.0 372.0L249.0 369.2L237.0 365.6L229.0 363.6L222.0 360.3L219.0 359.2L214.0 356.9L209.0 355.2L207.0 354.3M253.5 376.2L242.0 369.3L235.5 367.1L229.0 365.1L221.5 361.4L218.5 360.3L211.0 357.0L207.0 355.6L205.5 354.8M246.5 376.2L236.5 369.4L229.0 366.9L222.0 363.1L205.5 356.3L204.0 355.4M240.5 376.1L236.0 372.8L231.5 369.8L230.5 369.3L229.0 368.7L222.0 364.6L209.5 359.4L204.0 356.9L203.0 356.3M236.0 376.5L229.0 371.7L225.5 368.5L222.5 366.6L207.0 359.9L202.0 357.3M231.0 376.5L229.0 375.1L221.5 367.8L207.0 361.6L204.0 360.1L201.0 358.3M225.5 375.2L223.0 372.4L221.5 371.1L212.0 365.9L203.5 361.9L201.5 360.7L200.5 359.9L200.0 359.8M220.5 373.9L211.5 369.5L208.0 367.6L203.5 364.9L200.5 362.8L200.0 362.6L199.0 362.5" fill="none" stroke="#000" stroke-width="1.05" stroke-linejoin="round"/>
<defs><filter id="bl" x="-20%" y="-40%" width="140%" height="180%"><feGaussianBlur stdDeviation="1.1"/></filter><clipPath id="sealclip"><path d="M198 364L200.3 358L203 355.7L207 354L211 352.2L215 350.7L219 349.6L224 349H340V377H225L219.7 373.7L211.7 370.7L203 366.7Z"/></clipPath></defs>
<defs><linearGradient id="tb" gradientUnits="userSpaceOnUse" x1="232" y1="0" x2="335" y2="0"><stop offset="0" stop-color="#000" stop-opacity=".7"/><stop offset=".5" stop-color="#000" stop-opacity=".4"/><stop offset="1" stop-color="#000" stop-opacity="0"/></linearGradient></defs>
<g clip-path="url(#sealclip)"><path d="M203.5 358L207 353.5L211 351.7L215 350.2L219 349.1L226 348.5L241 348.7L238 353.5L228 358.5L213 361Z" fill="#000" opacity=".82" filter="url(#bl)"/><rect x="232" y="349" width="103" height="2.3" fill="url(#tb)"/></g>
<path d="M61.7 345V301.45H134.5V258H1003.5V301.45H1075.4V345Z" fill="none" stroke="#000" stroke-width="1.05"/>
<path d="M61.7 375.5H1075.4V447.05H61.7Z" fill="none" stroke="#000" stroke-width="1.1"/>
<path d="M206.7 375.5V366C207.5 357 216 351.2 226.5 349.6C231 348 235 346 240 345.5H600L800 347.3L880 348.5C897 348.8 906 349.6 911 351C918 353 925 358.5 930.6 367V375.5" fill="none" stroke="#000" stroke-width="1.05"/>
<rect x="1110" y="147" width="15.5" height="607.5" fill="url(#cb)" stroke="#2a2a2a" stroke-width="1"/><rect x="1109.5" y="753.6" width="16.5" height="1.4" fill="#000"/>
<path d="M1110.5 753.71h3M1125 753.71h-3M1110.5 695.08h3M1125 695.08h-3M1110.5 636.45h3M1125 636.45h-3M1110.5 577.82h3M1125 577.82h-3M1110.5 519.19h3M1125 519.19h-3M1110.5 460.56h3M1125 460.56h-3M1110.5 401.93h3M1125 401.93h-3M1110.5 343.30h3M1125 343.30h-3M1110.5 284.67h3M1125 284.67h-3M1110.5 226.04h3M1125 226.04h-3M1110.5 167.41h3M1125 167.41h-3" stroke="#000" stroke-width="1.1" fill="none"/>
<path d="M1102.1 111L1107.6 120.6H1096.7Z" fill="#000"/>
<path d="M1102.1 776.2L1107.6 767.4H1096.7Z" fill="#000"/>
</svg>
<div class="t" style="left:25.00px;top:11.00px;font-size:13px;transform-origin:0 0;transform:scaleX(1.07);color:#111;">Graphics</div>
<div class="t" style="left:125.80px;top:11.00px;font-size:13px;transform-origin:0 0;transform:scaleX(1.095);color:#222;">Convergence Plot 1</div>
<div class="t" style="left:304.60px;top:79.00px;font-size:13px;transform-origin:0 0;transform:scaleX(1.13);">par(100)=0.995</div>
<div class="t" style="left:418.00px;top:79.00px;font-size:13px;transform-origin:0 0;transform:scaleX(1.083);">Surface: Displacement field, X component (mm)</div>
<div class="t" style="left:725.00px;top:79.00px;font-size:13px;transform-origin:0 0;transform:scaleX(1.09);">Contour: abs(u) (mm)</div>
<div class="t" style="left:12.04px;top:766.00px;width:100px;text-align:center;font-size:12.5px;transform:scaleX(1.1)">-35</div>
<div class="t" style="left:84.47px;top:766.00px;width:100px;text-align:center;font-size:12.5px;transform:scaleX(1.1)">-30</div>
<div class="t" style="left:156.90px;top:766.00px;width:100px;text-align:center;font-size:12.5px;transform:scaleX(1.1)">-25</div>
<div class="t" style="left:229.33px;top:766.00px;width:100px;text-align:center;font-size:12.5px;transform:scaleX(1.1)">-20</div>
<div class="t" style="left:301.16px;top:766.00px;width:100px;text-align:center;font-size:12.5px;transform:scaleX(1.1)">-15</div>
<div class="t" style="left:374.19px;top:766.00px;width:100px;text-align:center;font-size:12.5px;transform:scaleX(1.1)">-10</div>
<div class="t" style="left:446.02px;top:766.00px;width:100px;text-align:center;font-size:12.5px;transform:scaleX(1.1)">-5</div>
<div class="t" style="left:519.05px;top:766.00px;width:100px;text-align:center;font-size:12.5px;transform:scaleX(1.1)">0</div>
<div class="t" style="left:591.48px;top:766.00px;width:100px;text-align:center;font-size:12.5px;transform:scaleX(1.1)">5</div>
<div class="t" style="left:663.91px;top:766.00px;width:100px;text-align:center;font-size:12.5px;transform:scaleX(1.1)">10</div>
<div class="t" style="left:736.34px;top:766.00px;width:100px;text-align:center;font-size:12.5px;transform:scaleX(1.1)">15</div>
<div class="t" style="left:808.17px;top:766.00px;width:100px;text-align:center;font-size:12.5px;transform:scaleX(1.1)">20</div>
<div class="t" style="left:881.20px;top:766.00px;width:100px;text-align:center;font-size:12.5px;transform:scaleX(1.1)">25</div>
<div class="t" style="left:953.03px;top:766.00px;width:100px;text-align:center;font-size:12.5px;transform:scaleX(1.1)">30</div>
<div class="t" style="left:1026.06px;top:766.00px;width:100px;text-align:center;font-size:12.5px;transform:scaleX(1.1)">35</div>
<div class="t" style="left:-52.00px;top:731.00px;width:100px;text-align:right;font-size:12.5px;transform-origin:100% 0;transform:scaleX(1.1)">-20</div>
<div class="t" style="left:-52.00px;top:659.00px;width:100px;text-align:right;font-size:12.5px;transform-origin:100% 0;transform:scaleX(1.1)">-15</div>
<div class="t" style="left:-52.00px;top:587.00px;width:100px;text-align:right;font-size:12.5px;transform-origin:100% 0;transform:scaleX(1.1)">-10</div>
<div class="t" style="left:-52.00px;top:514.00px;width:100px;text-align:right;font-size:12.5px;transform-origin:100% 0;transform:scaleX(1.1)">-5</div>
<div class="t" style="left:-52.00px;top:442.00px;width:100px;text-align:right;font-size:12.5px;transform-origin:100% 0;transform:scaleX(1.1)">0</div>
<div class="t" style="left:-52.00px;top:369.00px;width:100px;text-align:right;font-size:12.5px;transform-origin:100% 0;transform:scaleX(1.1)">5</div>
<div class="t" style="left:-52.00px;top:297.00px;width:100px;text-align:right;font-size:12.5px;transform-origin:100% 0;transform:scaleX(1.1)">10</div>
<div class="t" style="left:-52.00px;top:224.00px;width:100px;text-align:right;font-size:12.5px;transform-origin:100% 0;transform:scaleX(1.1)">15</div>
<div class="t" style="left:-52.00px;top:152.00px;width:100px;text-align:right;font-size:12.5px;transform-origin:100% 0;transform:scaleX(1.1)">20</div>
<div class="t" style="left:1133.20px;top:748.00px;font-size:12.5px;transform-origin:0 0;transform:scaleX(1.1);">-0.7</div>
<div class="t" style="left:1133.20px;top:689.00px;font-size:12.5px;transform-origin:0 0;transform:scaleX(1.1);">-0.6</div>
<div class="t" style="left:1133.20px;top:630.00px;font-size:12.5px;transform-origin:0 0;transform:scaleX(1.1);">-0.5</div>
<div class="t" style="left:1133.20px;top:572.00px;font-size:12.5px;transform-origin:0 0;transform:scaleX(1.1);">-0.4</div>
<div class="t" style="left:1133.20px;top:513.00px;font-size:12.5px;transform-origin:0 0;transform:scaleX(1.1);">-0.3</div>
<div class="t" style="left:1133.20px;top:455.00px;font-size:12.5px;transform-origin:0 0;transform:scaleX(1.1);">-0.2</div>
<div class="t" style="left:1133.20px;top:396.00px;font-size:12.5px;transform-origin:0 0;transform:scaleX(1.1);">-0.1</div>
<div class="t" style="left:1133.20px;top:337.00px;font-size:12.5px;transform-origin:0 0;transform:scaleX(1.1);">0</div>
<div class="t" style="left:1133.20px;top:279.00px;font-size:12.5px;transform-origin:0 0;transform:scaleX(1.1);">0.1</div>
<div class="t" style="left:1133.20px;top:220.00px;font-size:12.5px;transform-origin:0 0;transform:scaleX(1.1);">0.2</div>
<div class="t" style="left:1133.20px;top:161.00px;font-size:12.5px;transform-origin:0 0;transform:scaleX(1.1);">0.3</div>
<div class="t" style="left:1112.60px;top:111.30px;font-size:12.5px;transform-origin:0 0;transform:scaleX(1.1);">0.33</div>
<div class="t" style="left:1112.30px;top:765.50px;font-size:12.5px;transform-origin:0 0;transform:scaleX(1.1);">-0.7</div>
</body></html>
